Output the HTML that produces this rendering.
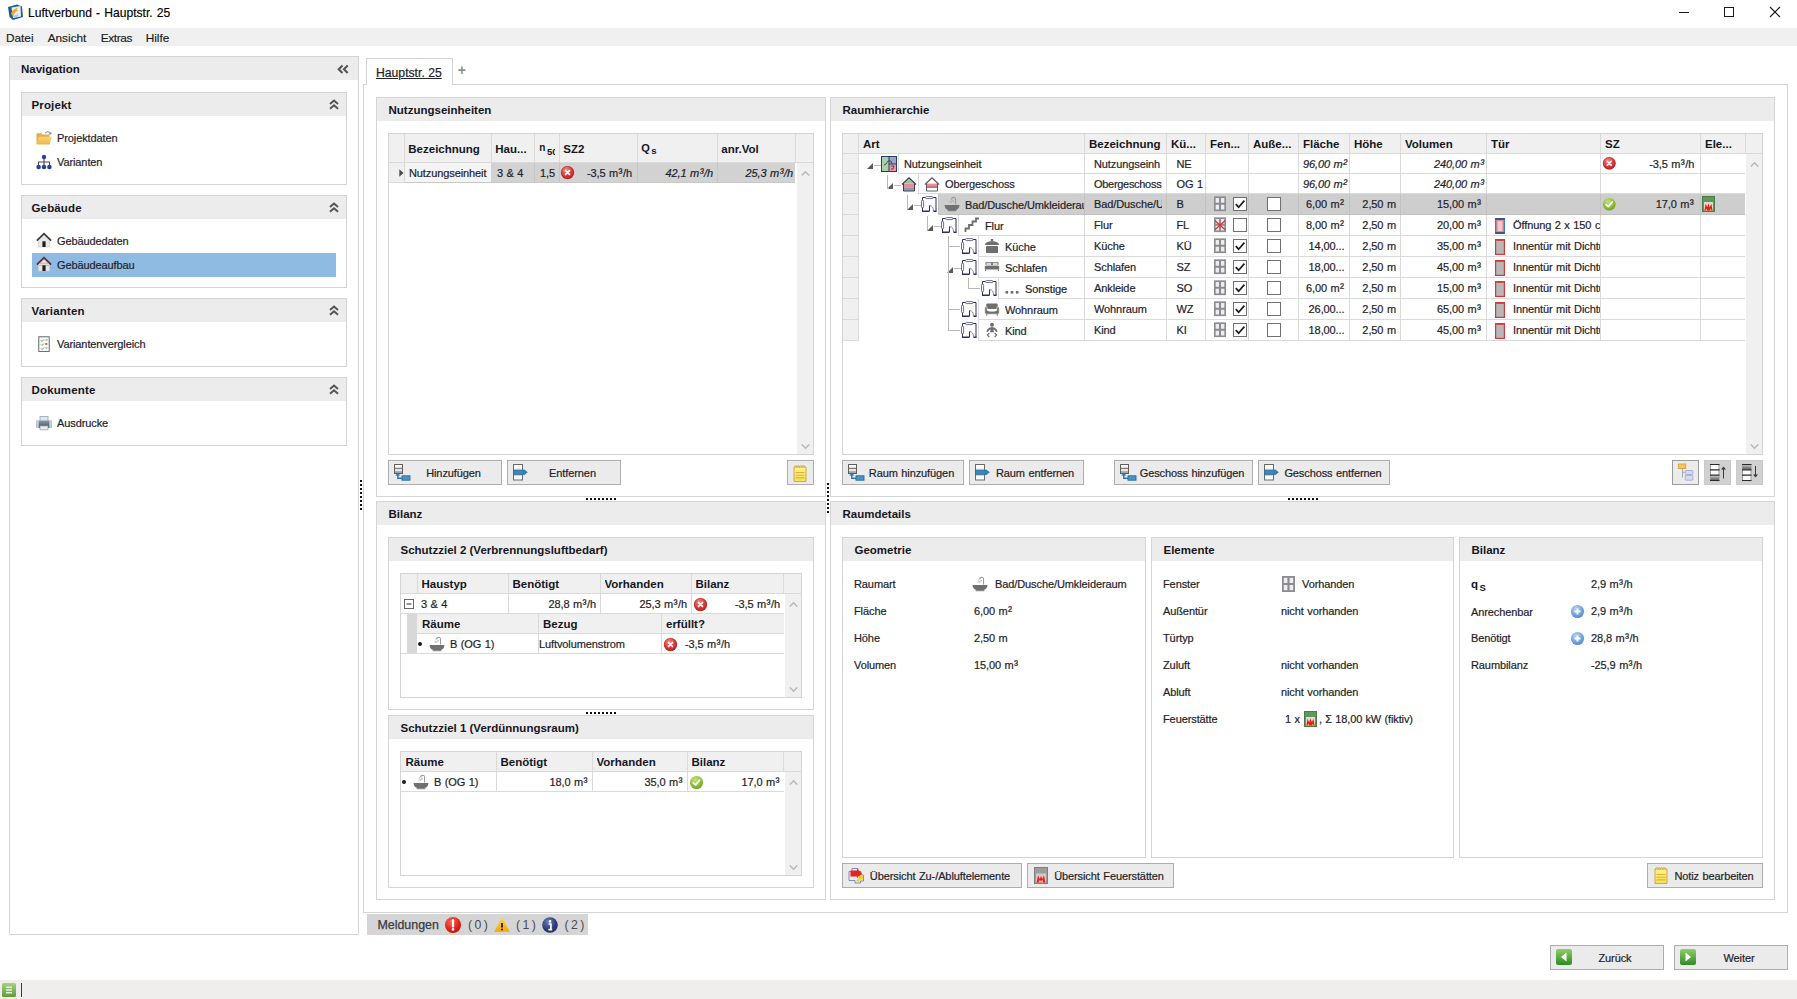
<!DOCTYPE html>
<html lang="de"><head><meta charset="utf-8"><title>Luftverbund - Hauptstr. 25</title>
<style>
html,body{margin:0;padding:0;background:#fff;}
body{width:1797px;height:999px;position:relative;overflow:hidden;font-family:"Liberation Sans",sans-serif;}
.a{position:absolute;}
.t,.b,.tt,.mn,.tab,.ml,.ml2,.t12,.plus{white-space:nowrap;color:#1e1e2a;font-family:"Liberation Sans",sans-serif;}
.t{font-size:11px;letter-spacing:-0.1px;word-spacing:0.6px;-webkit-text-stroke:0.2px #1e1e2a;}
.t12{font-size:12px;}
.i{font-style:italic;}
.b{font-size:11.500px;font-weight:bold;color:#16161e;}
.tt{font-size:12.100px;word-spacing:0.800px;color:#000;-webkit-text-stroke:0.15px #000;}
.mn{font-size:11.800px;color:#1a1a1a;-webkit-text-stroke:0.15px #1a1a1a;}
.tab{font-size:12.200px;text-decoration:underline;color:#22222c;-webkit-text-stroke:0.2px #22222c;}
.plus{font-size:14px;font-weight:bold;color:#909090;}
.ml{font-size:12.400px;color:#3a3a44;-webkit-text-stroke:0.25px #3a3a44;}
.ml2{font-size:12.300px;color:#4a4a54;word-spacing:-1px;}
.s3{font-size:12px;line-height:0;letter-spacing:0.600px;margin-left:0.300px;}
.hn{font-size:10px;position:relative;top:-2px;margin-left:1px;}
.h50{font-size:9.5px;position:relative;top:1.5px;margin-left:1.5px;}
.hq{font-size:11px;position:relative;top:-1px;}
.hs{font-size:9.5px;position:relative;top:1px;margin-left:1.5px;}
.bq{font-size:11.5px;position:relative;top:0px;}
.bs{font-size:9.5px;position:relative;top:3px;margin-left:1.5px;}
svg{overflow:visible;}
</style></head>
<body>
<svg width="0" height="0" style="position:absolute"><defs><radialGradient id="gRed" cx="0.4" cy="0.3" r="0.8"><stop offset="0" stop-color="#f08a86"/><stop offset="0.55" stop-color="#d83a36"/><stop offset="1" stop-color="#b01e1c"/></radialGradient><radialGradient id="gGreen" cx="0.4" cy="0.3" r="0.8"><stop offset="0" stop-color="#c7e27a"/><stop offset="0.55" stop-color="#8fbf3a"/><stop offset="1" stop-color="#6a9a22"/></radialGradient><radialGradient id="gBlue" cx="0.4" cy="0.3" r="0.8"><stop offset="0" stop-color="#b9d6f2"/><stop offset="0.6" stop-color="#6fa3d8"/><stop offset="1" stop-color="#4d84c0"/></radialGradient><radialGradient id="gRed2" cx="0.4" cy="0.3" r="0.8"><stop offset="0" stop-color="#ff6a5e"/><stop offset="0.6" stop-color="#e02318"/><stop offset="1" stop-color="#b80e08"/></radialGradient><radialGradient id="gNavy" cx="0.4" cy="0.3" r="0.8"><stop offset="0" stop-color="#6f7fb8"/><stop offset="0.6" stop-color="#2d3c7c"/><stop offset="1" stop-color="#1c2757"/></radialGradient><linearGradient id="gGrn" x1="0" y1="0" x2="0" y2="1"><stop offset="0" stop-color="#8fd06a"/><stop offset="1" stop-color="#2f8a24"/></linearGradient><linearGradient id="gGrn2" x1="0" y1="0" x2="0" y2="1"><stop offset="0" stop-color="#a4d47c"/><stop offset="1" stop-color="#5f9a3a"/></linearGradient><linearGradient id="gYel" x1="0" y1="0" x2="0" y2="1"><stop offset="0" stop-color="#ffd84a"/><stop offset="1" stop-color="#f5a800"/></linearGradient><linearGradient id="gFold" x1="0" y1="0" x2="0" y2="1"><stop offset="0" stop-color="#f7d67a"/><stop offset="1" stop-color="#eab84a"/></linearGradient><linearGradient id="gPrn" x1="0" y1="0" x2="0" y2="1"><stop offset="0" stop-color="#8a9aa8"/><stop offset="1" stop-color="#3e4e5c"/></linearGradient><linearGradient id="gNote" x1="0" y1="0" x2="0" y2="1"><stop offset="0" stop-color="#fdf290"/><stop offset="1" stop-color="#f6de5c"/></linearGradient><linearGradient id="gBtn" x1="0" y1="0" x2="0" y2="1"><stop offset="0" stop-color="#f0f0f0"/><stop offset="1" stop-color="#e6e6e6"/></linearGradient><linearGradient id="gBox" x1="0" y1="0" x2="0" y2="1"><stop offset="0" stop-color="#f8f8f8"/><stop offset="1" stop-color="#9a9a9a"/></linearGradient><linearGradient id="gRow" x1="0" y1="0" x2="0" y2="1"><stop offset="0" stop-color="#c8c8c8"/><stop offset="1" stop-color="#5a5a5a"/></linearGradient></defs></svg>
<svg class="a" style="left:7px;top:3.5px;" width="16" height="16" viewBox="0 0 16 16"><path d="M1 3L10 0.500L15 2.500L16 13L6 16L2.500 13Z" fill="#1f5f8a"/><path d="M4.500 3.500L13.500 2L14 12.500L6 14Z" fill="#e8eef6"/><path d="M4 10C5 6 8 4.500 11 3.500L9.500 6L12 6.500C9 7 7 8.500 6.500 12Z" fill="#f5a623"/><path d="M6 12l5-2 1 2-5 2z" fill="#b8c8e8"/></svg>
<div class="a tt" style="top:4.5px;line-height:16px;left:28px;">Luftverbund - Hauptstr. 25</div>
<div class="a" style="left:1679px;top:12px;width:10px;height:1px;background:#1a1a1a;"></div>
<div class="a" style="left:1724px;top:7px;width:10px;height:10px;border:1px solid #1a1a1a;box-sizing:border-box;"></div>
<svg class="a" style="left:1769px;top:6px;" width="12" height="12" viewBox="0 0 12 12"><path d="M1 1L11 11M11 1L1 11" stroke="#1a1a1a" stroke-width="1.1"/></svg>
<div class="a" style="left:0px;top:28px;width:1797px;height:18px;background:#f0f0f0;"></div>
<div class="a mn" style="top:29.9px;line-height:16px;left:6px;">Datei</div>
<div class="a mn" style="top:29.9px;line-height:16px;left:47.7px;">Ansicht</div>
<div class="a mn" style="top:29.9px;line-height:16px;left:100.7px;"><span style="letter-spacing:-0.350px">Extras</span></div>
<div class="a mn" style="top:29.9px;line-height:16px;left:145.7px;">Hilfe</div>
<div class="a" style="left:9px;top:56px;width:350px;height:879px;background:#fff;border:1px solid #d4d4d4;box-sizing:border-box;"></div>
<div class="a" style="left:10px;top:57px;width:348px;height:23px;background:#ececec;"></div>
<div class="a b" style="top:61.8px;line-height:14px;left:21px;">Navigation</div>
<svg class="a" style="left:337px;top:64px;" width="12" height="10" viewBox="0 0 12 10"><path d="M5.500 1.500L1.700 5.300L5.500 9.100M10.700 1.500L6.900 5.300L10.700 9.100" stroke="#555" stroke-width="2.100" fill="none"/></svg>
<div class="a" style="left:21px;top:92px;width:326px;height:93px;background:#fff;border:1px solid #d4d4d4;box-sizing:border-box;"></div>
<div class="a" style="left:22px;top:93px;width:324px;height:23px;background:#ececec;"></div>
<div class="a b" style="top:97.7px;line-height:14px;left:31.5px;letter-spacing:0.150px;">Projekt</div>
<svg class="a" style="left:329px;top:99px;" width="10" height="11" viewBox="0 0 10 11"><path d="M1 5L5 1.500L9 5M1 9.800L5 6.300L9 9.800" stroke="#555" stroke-width="2" fill="none"/></svg>
<div class="a" style="left:21px;top:195px;width:326px;height:93px;background:#fff;border:1px solid #d4d4d4;box-sizing:border-box;"></div>
<div class="a" style="left:22px;top:196px;width:324px;height:23px;background:#ececec;"></div>
<div class="a b" style="top:200.7px;line-height:14px;left:31.5px;letter-spacing:0.150px;">Gebäude</div>
<svg class="a" style="left:329px;top:202px;" width="10" height="11" viewBox="0 0 10 11"><path d="M1 5L5 1.500L9 5M1 9.800L5 6.300L9 9.800" stroke="#555" stroke-width="2" fill="none"/></svg>
<div class="a" style="left:21px;top:298px;width:326px;height:69px;background:#fff;border:1px solid #d4d4d4;box-sizing:border-box;"></div>
<div class="a" style="left:22px;top:299px;width:324px;height:23px;background:#ececec;"></div>
<div class="a b" style="top:303.7px;line-height:14px;left:31.5px;letter-spacing:0.150px;">Varianten</div>
<svg class="a" style="left:329px;top:305px;" width="10" height="11" viewBox="0 0 10 11"><path d="M1 5L5 1.500L9 5M1 9.800L5 6.300L9 9.800" stroke="#555" stroke-width="2" fill="none"/></svg>
<div class="a" style="left:21px;top:377px;width:326px;height:69px;background:#fff;border:1px solid #d4d4d4;box-sizing:border-box;"></div>
<div class="a" style="left:22px;top:378px;width:324px;height:23px;background:#ececec;"></div>
<div class="a b" style="top:382.7px;line-height:14px;left:31.5px;letter-spacing:0.150px;">Dokumente</div>
<svg class="a" style="left:329px;top:384px;" width="10" height="11" viewBox="0 0 10 11"><path d="M1 5L5 1.500L9 5M1 9.800L5 6.300L9 9.800" stroke="#555" stroke-width="2" fill="none"/></svg>
<div class="a" style="left:32px;top:253px;width:304px;height:24px;background:#8fbbe2;"></div>
<svg class="a" style="left:36px;top:129.5px;" width="16" height="16" viewBox="0 0 16 16"><path d="M0.5 4.2c0-.6.4-1 1-1h3.6l1.2 1.4h6.200c.6 0 1 .4 1 1V14H0.5Z" fill="#e2ae48"/><path d="M0.5 14.400L2.600 7.600c.2-.5.5-.8 1-.8h11.400c.6 0 .8.4.6 1l-2.200 6.600Z" fill="url(#gFold)"/><path d="M9.200 3.200c1.400-2 4-1.800 5 .2" stroke="#8a8a8a" stroke-width="1.100" fill="none"/><path d="M15.400 1.600v2.800h-2.800z" fill="#8a8a8a"/></svg>
<div class="a t" style="top:131px;line-height:14px;left:57px;">Projektdaten</div>
<svg class="a" style="left:36px;top:153.5px;" width="16" height="16" viewBox="0 0 16 16"><circle cx="8" cy="3" r="2.2" fill="#2a3f9e"/><path d="M8 5v3M2.5 11V8h11v3M8 8v3" stroke="#4a4a4a" stroke-width="1.1" fill="none"/><circle cx="2.6" cy="13" r="2.3" fill="#2a3f9e"/><circle cx="8" cy="13" r="2.3" fill="#2a3f9e"/><circle cx="13.4" cy="13" r="2.3" fill="#2a3f9e"/></svg>
<div class="a t" style="top:155px;line-height:14px;left:57px;">Varianten</div>
<svg class="a" style="left:36px;top:232px;" width="16" height="16" viewBox="0 0 16 16"><path d="M2.5 8.5V15h11V8.5L8 3.5Z" fill="#e8e8e8" stroke="#c8c8c8" stroke-width=".6"/><path d="M0.8 8.6L8 1.6L15.2 8.6" stroke="#3a3a3a" stroke-width="1.7" fill="none"/><rect x="6.4" y="9.3" width="3.2" height="5.7" fill="#1e1e1e"/></svg>
<div class="a t" style="top:233.5px;line-height:14px;left:57px;">Gebäudedaten</div>
<svg class="a" style="left:36px;top:256px;" width="16" height="16" viewBox="0 0 16 16"><path d="M2.5 8.5V15h11V8.5L8 3.5Z" fill="#e8e8e8" stroke="#c8c8c8" stroke-width=".6"/><path d="M4 7.2h8M3 9.4h10" stroke="#d88a8a" stroke-width=".7"/><path d="M0.8 8.6L8 1.6L15.2 8.6" stroke="#5a3030" stroke-width="1.7" fill="none"/><rect x="6.4" y="9.3" width="3.2" height="5.7" fill="#1e1e1e"/></svg>
<div class="a t" style="top:257.5px;line-height:14px;left:57px;">Gebäudeaufbau</div>
<svg class="a" style="left:36px;top:335.5px;" width="16" height="16" viewBox="0 0 16 16"><rect x="2.800" y="0.800" width="10.400" height="14.600" fill="#fbfbfb" stroke="#565656" stroke-width=".9"/><path d="M5 4.5l1 1 2-2M5 8.5l1 1 2-2M5 12.5l1 1 2-2" stroke="#3a9a4a" stroke-width=".9" fill="none"/><path d="M9.5 4h2M9.5 12h2" stroke="#3a9a4a" stroke-width=".9"/><path d="M9.3 7l2 2M11.3 7l-2 2" stroke="#d03030" stroke-width=".9"/></svg>
<div class="a t" style="top:337px;line-height:14px;left:57px;">Variantenvergleich</div>
<svg class="a" style="left:36px;top:414.5px;" width="16" height="16" viewBox="0 0 16 16"><rect x="4" y="1.5" width="8" height="5" fill="#dfe6ec" stroke="#9aa8b4" stroke-width=".8"/><rect x="0.300" y="5.500" width="15.400" height="7.500" rx="1" fill="url(#gPrn)"/><rect x="0.300" y="5.500" width="2.400" height="7.500" fill="#c8d2da"/><rect x="13.300" y="5.500" width="2.400" height="7.500" fill="#c8d2da"/><rect x="4" y="11" width="8" height="3.8" fill="#e8edf1" stroke="#9aa8b4" stroke-width=".8"/></svg>
<div class="a t" style="top:416px;line-height:14px;left:57px;">Ausdrucke</div>
<div class="a" style="left:360px;top:480px;width:2px;height:2px;background:#111;"></div>
<div class="a" style="left:360px;top:484px;width:2px;height:2px;background:#111;"></div>
<div class="a" style="left:360px;top:488px;width:2px;height:2px;background:#111;"></div>
<div class="a" style="left:360px;top:492px;width:2px;height:2px;background:#111;"></div>
<div class="a" style="left:360px;top:496px;width:2px;height:2px;background:#111;"></div>
<div class="a" style="left:360px;top:500px;width:2px;height:2px;background:#111;"></div>
<div class="a" style="left:360px;top:504px;width:2px;height:2px;background:#111;"></div>
<div class="a" style="left:360px;top:508px;width:2px;height:2px;background:#111;"></div>
<div class="a" style="left:363px;top:84px;width:1425px;height:829px;background:#fff;border:1px solid #d4d4d4;box-sizing:border-box;"></div>
<div class="a" style="left:366px;top:58px;width:87px;height:27px;background:#fff;border:1px solid #d4d4d4;box-sizing:border-box;border-bottom:none;"></div>
<div class="a tab" style="top:64.5px;line-height:16px;left:376px;">Hauptstr. 25</div>
<div class="a plus" style="top:62px;line-height:16px;left:361.9px;width:200px;text-align:center;">+</div>
<div class="a" style="left:376px;top:97px;width:450px;height:400px;background:#fff;border:1px solid #d4d4d4;box-sizing:border-box;"></div>
<div class="a" style="left:377px;top:98px;width:448px;height:23px;background:#ececec;"></div>
<div class="a b" style="top:102.8px;line-height:14px;left:388.5px;">Nutzungseinheiten</div>
<div class="a" style="left:388px;top:133px;width:426px;height:322px;background:#fff;border:1px solid #d4d4d4;box-sizing:border-box;"></div>
<div class="a" style="left:389px;top:134px;width:424px;height:29px;background:#f0f0f0;"></div>
<div class="a" style="left:404px;top:134px;width:1px;height:29px;background:#dadada;"></div>
<div class="a" style="left:491px;top:134px;width:1px;height:29px;background:#dadada;"></div>
<div class="a" style="left:534px;top:134px;width:1px;height:29px;background:#dadada;"></div>
<div class="a" style="left:559px;top:134px;width:1px;height:29px;background:#dadada;"></div>
<div class="a" style="left:637px;top:134px;width:1px;height:29px;background:#dadada;"></div>
<div class="a" style="left:717px;top:134px;width:1px;height:29px;background:#dadada;"></div>
<div class="a" style="left:795px;top:134px;width:1px;height:29px;background:#dadada;"></div>
<div class="a" style="left:389px;top:162px;width:424px;height:1px;background:#dadada;"></div>
<div class="a b" style="top:142px;line-height:14px;left:408.3px;width:81.7px;overflow:hidden;">Bezeichnung</div>
<div class="a b" style="top:142px;line-height:14px;left:495.3px;width:37.7px;overflow:hidden;">Hau...</div>
<div class="a b" style="top:142px;line-height:14px;left:538.3px;width:17.2px;overflow:hidden;"><span class="hn">n</span><span class="h50">50</span></div>
<div class="a b" style="top:142px;line-height:14px;left:563.3px;width:72.7px;overflow:hidden;">SZ2</div>
<div class="a b" style="top:142px;line-height:14px;left:641.3px;width:74.7px;overflow:hidden;"><span class="hq">Q</span><span class="hs">s</span></div>
<div class="a b" style="top:142px;line-height:14px;left:721.3px;width:72.7px;overflow:hidden;">anr.Vol</div>
<div class="a" style="left:389px;top:163px;width:15px;height:20px;background:#f0f0f0;"></div>
<div class="a" style="left:389px;top:182px;width:15px;height:1px;background:#dadada;"></div>
<div class="a" style="left:404px;top:163px;width:1px;height:20px;background:#dadada;"></div>
<div class="a" style="left:405px;top:163px;width:86px;height:19px;background:#f4f4f4;"></div>
<div class="a" style="left:491px;top:163px;width:304px;height:20px;background:#d2d2d2;"></div>
<div class="a" style="left:534px;top:163px;width:1px;height:20px;background:#c6c6c6;"></div>
<div class="a" style="left:559px;top:163px;width:1px;height:20px;background:#c6c6c6;"></div>
<div class="a" style="left:637px;top:163px;width:1px;height:20px;background:#c6c6c6;"></div>
<div class="a" style="left:717px;top:163px;width:1px;height:20px;background:#c6c6c6;"></div>
<div class="a" style="left:405px;top:182px;width:390px;height:1px;background:#c8c8c8;"></div>
<svg class="a" style="left:398.5px;top:169px;" width="5" height="8" viewBox="0 0 5 8"><path d="M0.300 0.300L4.500 4L0.300 7.700Z" fill="#4a4a4a"/></svg>
<div class="a t" style="top:165.8px;line-height:14px;left:409px;">Nutzungseinheit</div>
<div class="a t" style="top:165.8px;line-height:14px;left:497px;">3 &amp; 4</div>
<div class="a t" style="top:165.8px;line-height:14px;left:540px;">1,5</div>
<svg class="a" style="left:560.3px;top:165.3px;" width="15" height="15" viewBox="0 0 16 16"><circle cx="8" cy="8" r="7" fill="url(#gRed)"/><circle cx="8" cy="8" r="6.600" fill="none" stroke="#a01a18" stroke-width=".8" opacity=".55"/><path d="M5.900 5.900L10.100 10.100M10.100 5.900L5.900 10.100" stroke="#fff" stroke-width="1.900" stroke-linecap="round" opacity=".95"/></svg>
<div class="a t" style="top:165.8px;line-height:14px;right:1165px;text-align:right;">-3,5 m<span class="s3">³</span>/h</div>
<div class="a t i" style="top:165.8px;line-height:14px;right:1084px;text-align:right;">42,1 m<span class="s3">³</span>/h</div>
<div class="a t i" style="top:165.8px;line-height:14px;right:1004px;text-align:right;">25,3 m<span class="s3">³</span>/h</div>
<div class="a" style="left:797px;top:163px;width:16px;height:291px;background:#f0f0f0;"></div>
<svg class="a" style="left:800.5px;top:169.5px;" width="9" height="7" viewBox="0 0 9 7"><path d="M0.800 5.500L4.500 1.800L8.200 5.500" stroke="#b8b8b8" stroke-width="1.500" fill="none"/></svg>
<svg class="a" style="left:800.5px;top:442.5px;" width="9" height="7" viewBox="0 0 9 7"><path d="M0.800 1.500L4.500 5.200L8.200 1.500" stroke="#b8b8b8" stroke-width="1.500" fill="none"/></svg>
<div class="a" style="left:388px;top:460px;width:114px;height:25px;background:#ebebeb;border:1px solid #adadad;box-sizing:border-box;"></div>
<svg class="a" style="left:394px;top:463.8px;" width="16" height="16" viewBox="0 0 16 16"><rect x="0.500" y="0.500" width="8" height="9" fill="url(#gBox)" stroke="#5e5e5e"/><path d="M0.500 4.800h8" stroke="#5e5e5e"/><rect x="1" y="1" width="7" height="1.600" fill="#fdfdfd"/><rect x="1" y="5.300" width="7" height="1.400" fill="#fdfdfd"/><path d="M3.800 14V10.500" stroke="#2878b0" stroke-width="1.500" fill="none"/><path d="M1.200 11.600L3.800 8.800L6.400 11.600Z" fill="#2878b0"/><path d="M3.100 14.300h5" stroke="#2878b0" stroke-width="1.500"/><rect x="8" y="11.800" width="8" height="4.400" fill="#4a94c8" stroke="#2a6a9a" stroke-width=".9"/></svg>
<div class="a t" style="top:465.8px;line-height:14px;left:353.5px;width:200px;text-align:center;">Hinzufügen</div>
<div class="a" style="left:507px;top:460px;width:114px;height:25px;background:#ebebeb;border:1px solid #adadad;box-sizing:border-box;"></div>
<svg class="a" style="left:513px;top:463.8px;" width="16" height="16" viewBox="0 0 16 16"><rect x="0.500" y="0.500" width="9" height="15.500" fill="url(#gBox)" stroke="#6a6a6a"/><rect x="1" y="1" width="8" height="3.600" fill="#fbfbfb"/><rect x="1" y="11.600" width="8" height="3.800" fill="#fbfbfb"/><rect x="0.500" y="6.200" width="10.500" height="4.100" fill="#3c88bc" stroke="#2a6a9a" stroke-width=".8"/><path d="M11 5.300L14.800 8.250L11 11.200Z" fill="#2f7fb8"/></svg>
<div class="a t" style="top:465.8px;line-height:14px;left:472.5px;width:200px;text-align:center;">Entfernen</div>
<div class="a" style="left:787px;top:460px;width:27px;height:25px;background:#ebebeb;border:1px solid #adadad;box-sizing:border-box;"></div>
<svg class="a" style="left:792.5px;top:463.8px;" width="16" height="16" viewBox="0 0 16 16"><path d="M1 3h12v14.500H1Z" fill="url(#gNote)" stroke="#c8a42c" stroke-width=".9"/><path d="M1.500 3.500c0-2.500 1.700-2.500 1.700 0c0-2.500 1.700-2.500 1.700 0c0-2.500 1.700-2.500 1.700 0c0-2.500 1.700-2.500 1.700 0c0-2.500 1.700-2.500 1.700 0c0-2.500 1.700-2.500 1.700 0" fill="#fff6b0" stroke="#b8962c" stroke-width=".7"/><path d="M2.500 8.500h9M2.500 11.200h9M2.500 13.900h9" stroke="#dcb432" stroke-width="1.100"/></svg>
<div class="a" style="left:586px;top:498px;width:2px;height:2px;background:#111;"></div>
<div class="a" style="left:590px;top:498px;width:2px;height:2px;background:#111;"></div>
<div class="a" style="left:594px;top:498px;width:2px;height:2px;background:#111;"></div>
<div class="a" style="left:598px;top:498px;width:2px;height:2px;background:#111;"></div>
<div class="a" style="left:602px;top:498px;width:2px;height:2px;background:#111;"></div>
<div class="a" style="left:606px;top:498px;width:2px;height:2px;background:#111;"></div>
<div class="a" style="left:610px;top:498px;width:2px;height:2px;background:#111;"></div>
<div class="a" style="left:614px;top:498px;width:2px;height:2px;background:#111;"></div>
<div class="a" style="left:376px;top:501px;width:450px;height:399px;background:#fff;border:1px solid #d4d4d4;box-sizing:border-box;"></div>
<div class="a" style="left:377px;top:502px;width:448px;height:23px;background:#ececec;"></div>
<div class="a b" style="top:506.8px;line-height:14px;left:388.5px;">Bilanz</div>
<div class="a" style="left:388px;top:537px;width:426px;height:173px;background:#fff;border:1px solid #d4d4d4;box-sizing:border-box;"></div>
<div class="a" style="left:389px;top:538px;width:424px;height:23px;background:#ececec;"></div>
<div class="a b" style="top:542.8px;line-height:14px;left:400.5px;">Schutzziel 2 (Verbrennungsluftbedarf)</div>
<div class="a" style="left:400px;top:573px;width:402px;height:125px;background:#fff;border:1px solid #d4d4d4;box-sizing:border-box;"></div>
<div class="a" style="left:401px;top:574px;width:400px;height:20px;background:#f0f0f0;"></div>
<div class="a" style="left:417px;top:574px;width:1px;height:20px;background:#dadada;"></div>
<div class="a" style="left:508px;top:574px;width:1px;height:20px;background:#dadada;"></div>
<div class="a" style="left:600px;top:574px;width:1px;height:20px;background:#dadada;"></div>
<div class="a" style="left:691px;top:574px;width:1px;height:20px;background:#dadada;"></div>
<div class="a" style="left:783px;top:574px;width:1px;height:20px;background:#dadada;"></div>
<div class="a" style="left:401px;top:593px;width:400px;height:1px;background:#dadada;"></div>
<div class="a b" style="top:576.8px;line-height:14px;left:421.5px;width:85.5px;overflow:hidden;">Haustyp</div>
<div class="a b" style="top:576.8px;line-height:14px;left:512.5px;width:86.5px;overflow:hidden;">Benötigt</div>
<div class="a b" style="top:576.8px;line-height:14px;left:604.5px;width:85.5px;overflow:hidden;">Vorhanden</div>
<div class="a b" style="top:576.8px;line-height:14px;left:695.5px;width:86.5px;overflow:hidden;">Bilanz</div>
<div class="a" style="left:508px;top:594px;width:1px;height:20px;background:#dadada;"></div>
<div class="a" style="left:600px;top:594px;width:1px;height:20px;background:#dadada;"></div>
<div class="a" style="left:691px;top:594px;width:1px;height:20px;background:#dadada;"></div>
<div class="a" style="left:401px;top:613px;width:383px;height:1px;background:#dadada;"></div>
<svg class="a" style="left:404px;top:599px;" width="10" height="10" viewBox="0 0 10 10"><rect x="0.500" y="0.500" width="9" height="9" fill="#fff" stroke="#6a6a6a"/><path d="M2.500 5H7.500" stroke="#2a2a2a"/></svg>
<div class="a t" style="top:597px;line-height:14px;left:421px;">3 &amp; 4</div>
<div class="a t" style="top:597px;line-height:14px;right:1201px;text-align:right;">28,8 m<span class="s3">³</span>/h</div>
<div class="a t" style="top:597px;line-height:14px;right:1110px;text-align:right;">25,3 m<span class="s3">³</span>/h</div>
<svg class="a" style="left:692.5px;top:596.5px;" width="15" height="15" viewBox="0 0 16 16"><circle cx="8" cy="8" r="7" fill="url(#gRed)"/><circle cx="8" cy="8" r="6.600" fill="none" stroke="#a01a18" stroke-width=".8" opacity=".55"/><path d="M5.900 5.900L10.100 10.100M10.100 5.900L5.900 10.100" stroke="#fff" stroke-width="1.900" stroke-linecap="round" opacity=".95"/></svg>
<div class="a t" style="top:597px;line-height:14px;right:1017px;text-align:right;">-3,5 m<span class="s3">³</span>/h</div>
<div class="a" style="left:407px;top:614px;width:10px;height:40px;background:#d8d8d8;"></div>
<div class="a" style="left:417px;top:614px;width:367px;height:20px;background:#f0f0f0;"></div>
<div class="a" style="left:538px;top:614px;width:1px;height:40px;background:#dadada;"></div>
<div class="a" style="left:661px;top:614px;width:1px;height:40px;background:#dadada;"></div>
<div class="a" style="left:417px;top:633px;width:367px;height:1px;background:#dadada;"></div>
<div class="a" style="left:401px;top:653px;width:383px;height:1px;background:#dadada;"></div>
<div class="a b" style="top:616.8px;line-height:14px;left:422px;">Räume</div>
<div class="a b" style="top:616.8px;line-height:14px;left:543px;">Bezug</div>
<div class="a b" style="top:616.8px;line-height:14px;left:666px;">erfüllt?</div>
<div class="a" style="left:418px;top:642px;width:4px;height:4px;background:#1a1a1a;border-radius:2px;"></div>
<svg class="a" style="left:429px;top:636px;" width="16" height="16" viewBox="0 0 16 16"><path d="M0.600 9h14.800c0 3-2 5-5 5H5.600C2.600 14 .6 12 .6 9Z" fill="#707070"/><path d="M3.600 14.200h8.800v1H3.600z" fill="#707070"/><path d="M11.5 8.5V3c0-1.2-1-1.8-2-1.6L7.2 2.4" stroke="#9a9a9a" stroke-width="1.1" fill="none"/><path d="M8.6 1.6L6 4.6M7 5.2L5.6 7M8.2 4.6L7.6 6.6M9 3.6l.4 2" stroke="#9a9a9a" stroke-width=".7"/></svg>
<div class="a t" style="top:637px;line-height:14px;left:450px;">B (OG 1)</div>
<div class="a t" style="top:637px;line-height:14px;left:539px;">Luftvolumenstrom</div>
<svg class="a" style="left:663px;top:636.5px;" width="15" height="15" viewBox="0 0 16 16"><circle cx="8" cy="8" r="7" fill="url(#gRed)"/><circle cx="8" cy="8" r="6.600" fill="none" stroke="#a01a18" stroke-width=".8" opacity=".55"/><path d="M5.900 5.900L10.100 10.100M10.100 5.900L5.900 10.100" stroke="#fff" stroke-width="1.900" stroke-linecap="round" opacity=".95"/></svg>
<div class="a t" style="top:637px;line-height:14px;left:685px;">-3,5 m<span class="s3">³</span>/h</div>
<div class="a" style="left:785px;top:594px;width:16px;height:103px;background:#f0f0f0;"></div>
<svg class="a" style="left:788.5px;top:600.5px;" width="9" height="7" viewBox="0 0 9 7"><path d="M0.800 5.500L4.500 1.800L8.200 5.500" stroke="#b8b8b8" stroke-width="1.500" fill="none"/></svg>
<svg class="a" style="left:788.5px;top:685.5px;" width="9" height="7" viewBox="0 0 9 7"><path d="M0.800 1.500L4.500 5.200L8.200 1.500" stroke="#b8b8b8" stroke-width="1.500" fill="none"/></svg>
<div class="a" style="left:586px;top:712px;width:2px;height:2px;background:#111;"></div>
<div class="a" style="left:590px;top:712px;width:2px;height:2px;background:#111;"></div>
<div class="a" style="left:594px;top:712px;width:2px;height:2px;background:#111;"></div>
<div class="a" style="left:598px;top:712px;width:2px;height:2px;background:#111;"></div>
<div class="a" style="left:602px;top:712px;width:2px;height:2px;background:#111;"></div>
<div class="a" style="left:606px;top:712px;width:2px;height:2px;background:#111;"></div>
<div class="a" style="left:610px;top:712px;width:2px;height:2px;background:#111;"></div>
<div class="a" style="left:614px;top:712px;width:2px;height:2px;background:#111;"></div>
<div class="a" style="left:388px;top:715px;width:426px;height:173px;background:#fff;border:1px solid #d4d4d4;box-sizing:border-box;"></div>
<div class="a" style="left:389px;top:716px;width:424px;height:23px;background:#ececec;"></div>
<div class="a b" style="top:720.8px;line-height:14px;left:400.5px;">Schutzziel 1 (Verdünnungsraum)</div>
<div class="a" style="left:400px;top:751px;width:402px;height:125px;background:#fff;border:1px solid #d4d4d4;box-sizing:border-box;"></div>
<div class="a" style="left:401px;top:752px;width:400px;height:20px;background:#f0f0f0;"></div>
<div class="a" style="left:496px;top:752px;width:1px;height:20px;background:#dadada;"></div>
<div class="a" style="left:592px;top:752px;width:1px;height:20px;background:#dadada;"></div>
<div class="a" style="left:687px;top:752px;width:1px;height:20px;background:#dadada;"></div>
<div class="a" style="left:783px;top:752px;width:1px;height:20px;background:#dadada;"></div>
<div class="a" style="left:401px;top:771px;width:400px;height:1px;background:#dadada;"></div>
<div class="a b" style="top:754.8px;line-height:14px;left:405.5px;width:89.5px;overflow:hidden;">Räume</div>
<div class="a b" style="top:754.8px;line-height:14px;left:500.5px;width:90.5px;overflow:hidden;">Benötigt</div>
<div class="a b" style="top:754.8px;line-height:14px;left:596.5px;width:89.5px;overflow:hidden;">Vorhanden</div>
<div class="a b" style="top:754.8px;line-height:14px;left:691.5px;width:90.5px;overflow:hidden;">Bilanz</div>
<div class="a" style="left:496px;top:772px;width:1px;height:20px;background:#dadada;"></div>
<div class="a" style="left:592px;top:772px;width:1px;height:20px;background:#dadada;"></div>
<div class="a" style="left:687px;top:772px;width:1px;height:20px;background:#dadada;"></div>
<div class="a" style="left:401px;top:791px;width:383px;height:1px;background:#dadada;"></div>
<div class="a" style="left:402px;top:780px;width:4px;height:4px;background:#1a1a1a;border-radius:2px;"></div>
<svg class="a" style="left:413px;top:774px;" width="16" height="16" viewBox="0 0 16 16"><path d="M0.600 9h14.800c0 3-2 5-5 5H5.600C2.600 14 .6 12 .6 9Z" fill="#707070"/><path d="M3.600 14.200h8.800v1H3.600z" fill="#707070"/><path d="M11.5 8.5V3c0-1.2-1-1.8-2-1.6L7.2 2.4" stroke="#9a9a9a" stroke-width="1.1" fill="none"/><path d="M8.6 1.6L6 4.6M7 5.2L5.6 7M8.2 4.6L7.6 6.6M9 3.6l.4 2" stroke="#9a9a9a" stroke-width=".7"/></svg>
<div class="a t" style="top:775px;line-height:14px;left:434px;">B (OG 1)</div>
<div class="a t" style="top:775px;line-height:14px;right:1209px;text-align:right;">18,0 m<span class="s3">³</span></div>
<div class="a t" style="top:775px;line-height:14px;right:1114px;text-align:right;">35,0 m<span class="s3">³</span></div>
<svg class="a" style="left:688.5px;top:774.5px;" width="15" height="15" viewBox="0 0 16 16"><circle cx="8" cy="8" r="7" fill="url(#gGreen)"/><path d="M4.6 8.4L7 10.6L11.4 5.4" stroke="#fff" stroke-width="1.8" fill="none" stroke-linecap="round" stroke-linejoin="round"/></svg>
<div class="a t" style="top:775px;line-height:14px;right:1017px;text-align:right;">17,0 m<span class="s3">³</span></div>
<div class="a" style="left:785px;top:772px;width:16px;height:103px;background:#f0f0f0;"></div>
<svg class="a" style="left:788.5px;top:778.5px;" width="9" height="7" viewBox="0 0 9 7"><path d="M0.800 5.500L4.500 1.800L8.200 5.500" stroke="#b8b8b8" stroke-width="1.500" fill="none"/></svg>
<svg class="a" style="left:788.5px;top:863.5px;" width="9" height="7" viewBox="0 0 9 7"><path d="M0.800 1.500L4.500 5.200L8.200 1.500" stroke="#b8b8b8" stroke-width="1.500" fill="none"/></svg>
<div class="a" style="left:367px;top:914px;width:221px;height:21px;background:#d5d5d5;"></div>
<div class="a ml" style="top:916.5px;line-height:16px;left:377.5px;">Meldungen</div>
<svg class="a" style="left:445px;top:916.5px;" width="16" height="16" viewBox="0 0 16 16"><circle cx="8" cy="8" r="8" fill="url(#gRed2)"/><path d="M8 3.2V9.6" stroke="#fff" stroke-width="2.2" stroke-linecap="round"/><circle cx="8" cy="12.4" r="1.3" fill="#fff"/></svg>
<div class="a ml2" style="top:916.5px;line-height:16px;left:468px;">( 0 )</div>
<svg class="a" style="left:493.5px;top:916.5px;" width="16" height="16" viewBox="0 0 16 16"><path d="M8 0.300L15.800 14.800H0.200Z" fill="url(#gYel)"/><path d="M8 6V10.5" stroke="#222" stroke-width="1.8"/><circle cx="8" cy="12.6" r="1" fill="#222"/></svg>
<div class="a ml2" style="top:916.5px;line-height:16px;left:516px;">( 1 )</div>
<svg class="a" style="left:541.5px;top:916.5px;" width="16" height="16" viewBox="0 0 16 16"><circle cx="8" cy="8" r="7.8" fill="url(#gNavy)"/><circle cx="8" cy="4.4" r="1.3" fill="#fff"/><path d="M6.6 7H8.9V12.6M6.4 12.6H10.2" stroke="#fff" stroke-width="1.7" fill="none"/></svg>
<div class="a ml2" style="top:916.5px;line-height:16px;left:564.5px;">( 2 )</div>
<div class="a" style="left:830px;top:97px;width:945px;height:400px;background:#fff;border:1px solid #d4d4d4;box-sizing:border-box;"></div>
<div class="a" style="left:831px;top:98px;width:943px;height:23px;background:#ececec;"></div>
<div class="a b" style="top:102.8px;line-height:14px;left:842.5px;">Raumhierarchie</div>
<div class="a" style="left:842px;top:133px;width:921px;height:322px;background:#fff;border:1px solid #d4d4d4;box-sizing:border-box;"></div>
<div class="a" style="left:843px;top:134px;width:919px;height:20px;background:#f0f0f0;"></div>
<div class="a" style="left:858px;top:134px;width:1px;height:20px;background:#dadada;"></div>
<div class="a" style="left:1084px;top:134px;width:1px;height:20px;background:#dadada;"></div>
<div class="a" style="left:1166px;top:134px;width:1px;height:20px;background:#dadada;"></div>
<div class="a" style="left:1205px;top:134px;width:1px;height:20px;background:#dadada;"></div>
<div class="a" style="left:1248px;top:134px;width:1px;height:20px;background:#dadada;"></div>
<div class="a" style="left:1298px;top:134px;width:1px;height:20px;background:#dadada;"></div>
<div class="a" style="left:1349px;top:134px;width:1px;height:20px;background:#dadada;"></div>
<div class="a" style="left:1400px;top:134px;width:1px;height:20px;background:#dadada;"></div>
<div class="a" style="left:1486px;top:134px;width:1px;height:20px;background:#dadada;"></div>
<div class="a" style="left:1600px;top:134px;width:1px;height:20px;background:#dadada;"></div>
<div class="a" style="left:1700px;top:134px;width:1px;height:20px;background:#dadada;"></div>
<div class="a" style="left:1745px;top:134px;width:1px;height:20px;background:#dadada;"></div>
<div class="a" style="left:843px;top:153px;width:919px;height:1px;background:#dadada;"></div>
<div class="a b" style="top:136.6px;line-height:14px;left:863px;width:220px;overflow:hidden;">Art</div>
<div class="a b" style="top:136.6px;line-height:14px;left:1089px;width:76px;overflow:hidden;">Bezeichnung</div>
<div class="a b" style="top:136.6px;line-height:14px;left:1171px;width:33px;overflow:hidden;">Kü...</div>
<div class="a b" style="top:136.6px;line-height:14px;left:1210px;width:37px;overflow:hidden;">Fen...</div>
<div class="a b" style="top:136.6px;line-height:14px;left:1253px;width:44px;overflow:hidden;">Auße...</div>
<div class="a b" style="top:136.6px;line-height:14px;left:1303px;width:45px;overflow:hidden;">Fläche</div>
<div class="a b" style="top:136.6px;line-height:14px;left:1354px;width:45px;overflow:hidden;">Höhe</div>
<div class="a b" style="top:136.6px;line-height:14px;left:1405px;width:80px;overflow:hidden;">Volumen</div>
<div class="a b" style="top:136.6px;line-height:14px;left:1491px;width:108px;overflow:hidden;">Tür</div>
<div class="a b" style="top:136.6px;line-height:14px;left:1605px;width:94px;overflow:hidden;">SZ</div>
<div class="a b" style="top:136.6px;line-height:14px;left:1705px;width:39px;overflow:hidden;">Ele...</div>
<div class="a" style="left:843px;top:154px;width:15px;height:187px;background:#f0f0f0;"></div>
<div class="a" style="left:858px;top:154px;width:1px;height:187px;background:#dadada;"></div>
<div class="a" style="left:843px;top:173px;width:15px;height:1px;background:#dadada;"></div>
<div class="a" style="left:898px;top:173px;width:847px;height:1px;background:#dadada;"></div>
<div class="a" style="left:898px;top:154px;width:1px;height:20px;background:#dadada;"></div>
<div class="a" style="left:1084px;top:154px;width:1px;height:20px;background:#dadada;"></div>
<div class="a" style="left:1166px;top:154px;width:1px;height:20px;background:#dadada;"></div>
<div class="a" style="left:1205px;top:154px;width:1px;height:20px;background:#dadada;"></div>
<div class="a" style="left:1248px;top:154px;width:1px;height:20px;background:#dadada;"></div>
<div class="a" style="left:1298px;top:154px;width:1px;height:20px;background:#dadada;"></div>
<div class="a" style="left:1349px;top:154px;width:1px;height:20px;background:#dadada;"></div>
<div class="a" style="left:1400px;top:154px;width:1px;height:20px;background:#dadada;"></div>
<div class="a" style="left:1486px;top:154px;width:1px;height:20px;background:#dadada;"></div>
<div class="a" style="left:1600px;top:154px;width:1px;height:20px;background:#dadada;"></div>
<div class="a" style="left:1700px;top:154px;width:1px;height:20px;background:#dadada;"></div>
<svg class="a" style="left:881px;top:155.7px;" width="16" height="16" viewBox="0 0 16 16"><rect x="0.5" y="0.5" width="15" height="15" fill="#fff" stroke="#2a3a6a"/><rect x="1" y="1" width="7" height="14" fill="#a8d0a8"/><rect x="8" y="1" width="7" height="7" fill="#9aa8c8"/><rect x="8" y="8" width="7" height="7" fill="#f0989a"/><path d="M8 .5V15.5M8 8H15.5" stroke="#2a3a6a" stroke-width="1"/><path d="M3 9l2-1 2-3 3 0 1 3M10 10h3l-1 3h-2" stroke="#2a3a6a" stroke-width=".8" fill="none"/></svg>
<div class="a t" style="top:157px;line-height:14px;left:904px;width:180px;overflow:hidden;">Nutzungseinheit</div>
<div class="a t" style="top:156.8px;line-height:14px;left:1094px;width:68px;overflow:hidden;">Nutzungseinh</div>
<div class="a t" style="top:156.8px;line-height:14px;left:1176.5px;">NE</div>
<div class="a t i" style="top:156.8px;line-height:14px;right:449.5px;text-align:right;">96,00 m<span class="s3">²</span></div>
<div class="a t i" style="top:156.8px;line-height:14px;right:312.5px;text-align:right;">240,00 m<span class="s3">³</span></div>
<svg class="a" style="left:1601.7px;top:156.1px;" width="14.5" height="14.5" viewBox="0 0 16 16"><circle cx="8" cy="8" r="7" fill="url(#gRed)"/><circle cx="8" cy="8" r="6.600" fill="none" stroke="#a01a18" stroke-width=".8" opacity=".55"/><path d="M5.900 5.900L10.100 10.100M10.100 5.900L5.900 10.100" stroke="#fff" stroke-width="1.900" stroke-linecap="round" opacity=".95"/></svg>
<div class="a t" style="top:156.8px;line-height:14px;right:102.7px;text-align:right;">-3,5 m<span class="s3">³</span>/h</div>
<div class="a" style="left:843px;top:193px;width:15px;height:1px;background:#dadada;"></div>
<div class="a" style="left:918px;top:193px;width:827px;height:1px;background:#dadada;"></div>
<div class="a" style="left:918px;top:174px;width:1px;height:20px;background:#dadada;"></div>
<div class="a" style="left:1084px;top:174px;width:1px;height:20px;background:#dadada;"></div>
<div class="a" style="left:1166px;top:174px;width:1px;height:20px;background:#dadada;"></div>
<div class="a" style="left:1205px;top:174px;width:1px;height:20px;background:#dadada;"></div>
<div class="a" style="left:1248px;top:174px;width:1px;height:20px;background:#dadada;"></div>
<div class="a" style="left:1298px;top:174px;width:1px;height:20px;background:#dadada;"></div>
<div class="a" style="left:1349px;top:174px;width:1px;height:20px;background:#dadada;"></div>
<div class="a" style="left:1400px;top:174px;width:1px;height:20px;background:#dadada;"></div>
<div class="a" style="left:1486px;top:174px;width:1px;height:20px;background:#dadada;"></div>
<div class="a" style="left:1600px;top:174px;width:1px;height:20px;background:#dadada;"></div>
<div class="a" style="left:1700px;top:174px;width:1px;height:20px;background:#dadada;"></div>
<svg class="a" style="left:901px;top:175.7px;" width="16" height="16" viewBox="0 0 16 16"><path d="M2.5 7.5V15h11V7.5L8 2.5Z" fill="#fff"/><path d="M3 7.6L8 3l5 4.6Z" fill="#8fc89a"/><rect x="3" y="7.6" width="10" height="3.6" fill="#f08a90"/><rect x="3" y="11.2" width="10" height="3.6" fill="#8a98c0"/><path d="M2.5 7.5V15h11V7.5" stroke="#3a3a4a" stroke-width="1" fill="none"/><path d="M1 8.5L8 1.8L15 8.5" stroke="#3a3a4a" stroke-width="1.3" fill="none"/></svg>
<svg class="a" style="left:924px;top:175.7px;" width="16" height="16" viewBox="0 0 16 16"><path d="M2.5 7.5V15h11V7.5L8 2.5Z" fill="#fff"/><rect x="3" y="7.6" width="10" height="3.6" fill="#f08a90"/><path d="M2.5 7.5V15h11V7.5M2.5 11.2h11" stroke="#5a5a6a" stroke-width="1" fill="none"/><path d="M1 8.5L8 1.8L15 8.5" stroke="#5a5a6a" stroke-width="1.3" fill="none"/></svg>
<div class="a t" style="top:177px;line-height:14px;left:945px;width:139px;overflow:hidden;">Obergeschoss</div>
<div class="a t" style="top:176.8px;line-height:14px;left:1094px;width:68px;overflow:hidden;letter-spacing:-0.300px;">Obergeschoss</div>
<div class="a t" style="top:176.8px;line-height:14px;left:1176.5px;">OG 1</div>
<div class="a t i" style="top:176.8px;line-height:14px;right:449.5px;text-align:right;">96,00 m<span class="s3">²</span></div>
<div class="a t i" style="top:176.8px;line-height:14px;right:312.5px;text-align:right;">240,00 m<span class="s3">³</span></div>
<div class="a" style="left:843px;top:214px;width:15px;height:1px;background:#dadada;"></div>
<div class="a" style="left:938px;top:194px;width:807px;height:21px;background:#cecece;"></div>
<div class="a" style="left:938px;top:214px;width:807px;height:1px;background:#c2c2c2;"></div>
<div class="a" style="left:938px;top:194px;width:1px;height:21px;background:#c2c2c2;"></div>
<div class="a" style="left:1084px;top:194px;width:1px;height:21px;background:#c2c2c2;"></div>
<div class="a" style="left:1166px;top:194px;width:1px;height:21px;background:#c2c2c2;"></div>
<div class="a" style="left:1205px;top:194px;width:1px;height:21px;background:#c2c2c2;"></div>
<div class="a" style="left:1248px;top:194px;width:1px;height:21px;background:#c2c2c2;"></div>
<div class="a" style="left:1298px;top:194px;width:1px;height:21px;background:#c2c2c2;"></div>
<div class="a" style="left:1349px;top:194px;width:1px;height:21px;background:#c2c2c2;"></div>
<div class="a" style="left:1400px;top:194px;width:1px;height:21px;background:#c2c2c2;"></div>
<div class="a" style="left:1486px;top:194px;width:1px;height:21px;background:#c2c2c2;"></div>
<div class="a" style="left:1600px;top:194px;width:1px;height:21px;background:#c2c2c2;"></div>
<div class="a" style="left:1700px;top:194px;width:1px;height:21px;background:#c2c2c2;"></div>
<svg class="a" style="left:921px;top:196.2px;" width="16" height="16" viewBox="0 0 16 16"><path d="M1.500 1.500H15V15.500" stroke="#2a2f6a" stroke-width="1" fill="none"/><path d="M1.500 1.500V15.500" stroke="#2a2f6a" stroke-width="1" fill="none"/><path d="M1 15.200H8.500M12.500 15.200H15.500" stroke="#2a2f6a" stroke-width="1.600"/><rect x="4.500" y="0.600" width="7.500" height="2" rx="1" fill="#fff" stroke="#5a5f8a" stroke-width=".9"/><rect x="0.500" y="4.200" width="2.100" height="7.600" rx="1" fill="#fff" stroke="#5a5f8a" stroke-width=".9"/><path d="M8.500 15.200V9.500" stroke="#2a2f6a" stroke-width="1.100"/><path d="M8.500 9.500c2.600 0 4 2 4 5.500" stroke="#7a7a8a" stroke-width=".9" fill="none"/></svg>
<svg class="a" style="left:944px;top:196.2px;" width="16" height="16" viewBox="0 0 16 16"><path d="M0.600 9h14.800c0 3-2 5-5 5H5.600C2.600 14 .6 12 .6 9Z" fill="#707070"/><path d="M3.600 14.200h8.800v1H3.600z" fill="#707070"/><path d="M11.5 8.5V3c0-1.2-1-1.8-2-1.6L7.2 2.4" stroke="#9a9a9a" stroke-width="1.1" fill="none"/><path d="M8.6 1.6L6 4.6M7 5.2L5.6 7M8.2 4.6L7.6 6.6M9 3.6l.4 2" stroke="#9a9a9a" stroke-width=".7"/></svg>
<div class="a t" style="top:198px;line-height:14px;left:965px;width:119px;overflow:hidden;">Bad/Dusche/Umkleideraum</div>
<div class="a t" style="top:197.3px;line-height:14px;left:1094px;width:68px;overflow:hidden;">Bad/Dusche/U</div>
<div class="a t" style="top:197.3px;line-height:14px;left:1176.5px;">B</div>
<svg class="a" style="left:1214px;top:196.3px;" width="12" height="15.5" viewBox="0 0 13 16"><rect x="0.900" y="0.900" width="11.200" height="14.200" fill="#eeeef2" stroke="#8c8c90" stroke-width="1.800"/><path d="M6.500 .6V15.400M.6 8H12.400" stroke="#8c8c90" stroke-width="2.200"/></svg>
<svg class="a" style="left:1233px;top:197px;" width="14" height="14" viewBox="0 0 14 14"><rect x="0.5" y="0.5" width="13" height="13" fill="#fff" stroke="#707070"/><path d="M2.800 7.200L5.600 10.200L11.400 3.600" stroke="#1e1e1e" stroke-width="1.700" fill="none"/></svg>
<svg class="a" style="left:1267px;top:197px;" width="14" height="14" viewBox="0 0 14 14"><rect x="0.5" y="0.5" width="13" height="13" fill="#fff" stroke="#707070"/></svg>
<div class="a t" style="top:197.3px;line-height:14px;right:452.5px;text-align:right;">6,00 m<span class="s3">²</span></div>
<div class="a t" style="top:197.3px;line-height:14px;right:401px;text-align:right;">2,50 m</div>
<div class="a t" style="top:197.3px;line-height:14px;right:315.5px;text-align:right;">15,00 m<span class="s3">³</span></div>
<svg class="a" style="left:1601.7px;top:196.6px;" width="14.5" height="14.5" viewBox="0 0 16 16"><circle cx="8" cy="8" r="7" fill="url(#gGreen)"/><path d="M4.6 8.4L7 10.6L11.4 5.4" stroke="#fff" stroke-width="1.8" fill="none" stroke-linecap="round" stroke-linejoin="round"/></svg>
<div class="a t" style="top:197.3px;line-height:14px;right:102.7px;text-align:right;">17,0 m<span class="s3">³</span></div>
<svg class="a" style="left:1702px;top:196px;" width="13" height="16" viewBox="0 0 13 16"><rect x="0.500" y="0.500" width="12" height="15" fill="#5c9a5c" stroke="#4a7c4a" stroke-width="1"/><rect x="2" y="6" width="9" height="8.500" fill="#e8d8cc"/><path d="M2.400 14.500L3.600 7.800L5.200 11.200L6.500 7.500L7.800 11.200L9.400 7.800L10.600 14.500Z" fill="#e02020"/><path d="M3.400 14.500L4.300 12.600L5.200 14.500ZM7.800 14.500L8.700 12.600L9.600 14.500Z" fill="#f6d23a"/></svg>
<div class="a" style="left:843px;top:235px;width:15px;height:1px;background:#dadada;"></div>
<div class="a" style="left:958px;top:235px;width:787px;height:1px;background:#dadada;"></div>
<div class="a" style="left:958px;top:215px;width:1px;height:21px;background:#dadada;"></div>
<div class="a" style="left:1084px;top:215px;width:1px;height:21px;background:#dadada;"></div>
<div class="a" style="left:1166px;top:215px;width:1px;height:21px;background:#dadada;"></div>
<div class="a" style="left:1205px;top:215px;width:1px;height:21px;background:#dadada;"></div>
<div class="a" style="left:1248px;top:215px;width:1px;height:21px;background:#dadada;"></div>
<div class="a" style="left:1298px;top:215px;width:1px;height:21px;background:#dadada;"></div>
<div class="a" style="left:1349px;top:215px;width:1px;height:21px;background:#dadada;"></div>
<div class="a" style="left:1400px;top:215px;width:1px;height:21px;background:#dadada;"></div>
<div class="a" style="left:1486px;top:215px;width:1px;height:21px;background:#dadada;"></div>
<div class="a" style="left:1600px;top:215px;width:1px;height:21px;background:#dadada;"></div>
<div class="a" style="left:1700px;top:215px;width:1px;height:21px;background:#dadada;"></div>
<svg class="a" style="left:941px;top:217.2px;" width="16" height="16" viewBox="0 0 16 16"><path d="M1.500 1.500H15V15.500" stroke="#2a2f6a" stroke-width="1" fill="none"/><path d="M1.500 1.500V15.500" stroke="#2a2f6a" stroke-width="1" fill="none"/><path d="M1 15.200H8.500M12.500 15.200H15.500" stroke="#2a2f6a" stroke-width="1.600"/><rect x="4.500" y="0.600" width="7.500" height="2" rx="1" fill="#fff" stroke="#5a5f8a" stroke-width=".9"/><rect x="0.500" y="4.200" width="2.100" height="7.600" rx="1" fill="#fff" stroke="#5a5f8a" stroke-width=".9"/><path d="M8.500 15.200V9.500" stroke="#2a2f6a" stroke-width="1.100"/><path d="M8.500 9.500c2.600 0 4 2 4 5.500" stroke="#7a7a8a" stroke-width=".9" fill="none"/></svg>
<svg class="a" style="left:964px;top:217.2px;" width="16" height="16" viewBox="0 0 16 16"><path d="M1.5 15V11.5H5V8H8.5V4.5H12V1.5H15" stroke="#6e6e6e" stroke-width="1.8" fill="none"/></svg>
<div class="a t" style="top:219px;line-height:14px;left:985px;width:99px;overflow:hidden;">Flur</div>
<div class="a t" style="top:218.3px;line-height:14px;left:1094px;width:68px;overflow:hidden;">Flur</div>
<div class="a t" style="top:218.3px;line-height:14px;left:1176.5px;">FL</div>
<svg class="a" style="left:1214px;top:217.3px;" width="12" height="15.5" viewBox="0 0 13 16"><rect x="0.900" y="0.900" width="11.200" height="14.200" fill="#eeeef2" stroke="#8c8c90" stroke-width="1.800"/><path d="M6.500 .6V15.400M.6 8H12.400" stroke="#8c8c90" stroke-width="2.200"/><path d="M1 3.500L12 13.500M12 3.500L1 13.500" stroke="#e03030" stroke-width="1.4"/></svg>
<svg class="a" style="left:1233px;top:218px;" width="14" height="14" viewBox="0 0 14 14"><rect x="0.5" y="0.5" width="13" height="13" fill="#fff" stroke="#707070"/></svg>
<svg class="a" style="left:1267px;top:218px;" width="14" height="14" viewBox="0 0 14 14"><rect x="0.5" y="0.5" width="13" height="13" fill="#fff" stroke="#707070"/></svg>
<div class="a t" style="top:218.3px;line-height:14px;right:452.5px;text-align:right;">8,00 m<span class="s3">²</span></div>
<div class="a t" style="top:218.3px;line-height:14px;right:401px;text-align:right;">2,50 m</div>
<div class="a t" style="top:218.3px;line-height:14px;right:315.5px;text-align:right;">20,00 m<span class="s3">³</span></div>
<svg class="a" style="left:1495px;top:217.5px;" width="10" height="16" viewBox="0 0 10 16"><rect x="0.600" y="0.600" width="8.800" height="14.800" fill="#e88888" stroke="#3a7ac8" stroke-width="1.200"/><rect x="0.400" y="0.200" width="9.200" height="1.600" fill="#2a4a8a"/><rect x="0.400" y="14.200" width="9.200" height="1.600" fill="#2a4a8a"/><rect x="2.600" y="3" width="4.800" height="10" fill="#f0c8c8"/></svg>
<div class="a t" style="top:218.3px;line-height:14px;left:1513px;width:87px;overflow:hidden;">Öffnung 2 x 150 cm<span class="s3">²</span></div>
<div class="a" style="left:843px;top:256px;width:15px;height:1px;background:#dadada;"></div>
<div class="a" style="left:978px;top:256px;width:767px;height:1px;background:#dadada;"></div>
<div class="a" style="left:978px;top:236px;width:1px;height:21px;background:#dadada;"></div>
<div class="a" style="left:1084px;top:236px;width:1px;height:21px;background:#dadada;"></div>
<div class="a" style="left:1166px;top:236px;width:1px;height:21px;background:#dadada;"></div>
<div class="a" style="left:1205px;top:236px;width:1px;height:21px;background:#dadada;"></div>
<div class="a" style="left:1248px;top:236px;width:1px;height:21px;background:#dadada;"></div>
<div class="a" style="left:1298px;top:236px;width:1px;height:21px;background:#dadada;"></div>
<div class="a" style="left:1349px;top:236px;width:1px;height:21px;background:#dadada;"></div>
<div class="a" style="left:1400px;top:236px;width:1px;height:21px;background:#dadada;"></div>
<div class="a" style="left:1486px;top:236px;width:1px;height:21px;background:#dadada;"></div>
<div class="a" style="left:1600px;top:236px;width:1px;height:21px;background:#dadada;"></div>
<div class="a" style="left:1700px;top:236px;width:1px;height:21px;background:#dadada;"></div>
<svg class="a" style="left:961px;top:238.2px;" width="16" height="16" viewBox="0 0 16 16"><path d="M1.500 1.500H15V15.500" stroke="#2a2f6a" stroke-width="1" fill="none"/><path d="M1.500 1.500V15.500" stroke="#2a2f6a" stroke-width="1" fill="none"/><path d="M1 15.200H8.500M12.500 15.200H15.500" stroke="#2a2f6a" stroke-width="1.600"/><rect x="4.500" y="0.600" width="7.500" height="2" rx="1" fill="#fff" stroke="#5a5f8a" stroke-width=".9"/><rect x="0.500" y="4.200" width="2.100" height="7.600" rx="1" fill="#fff" stroke="#5a5f8a" stroke-width=".9"/><path d="M8.500 15.200V9.500" stroke="#2a2f6a" stroke-width="1.100"/><path d="M8.500 9.500c2.600 0 4 2 4 5.500" stroke="#7a7a8a" stroke-width=".9" fill="none"/></svg>
<svg class="a" style="left:984px;top:238.2px;" width="16" height="16" viewBox="0 0 16 16"><rect x="2" y="8" width="12" height="7" rx=".8" fill="#6e6e6e"/><path d="M1 7c0-2.6 3-3.8 7-3.8S15 4.4 15 7Z" fill="#6e6e6e"/><rect x="6.8" y="1" width="2.4" height="2.6" rx=".6" fill="#6e6e6e"/></svg>
<div class="a t" style="top:240px;line-height:14px;left:1005px;width:79px;overflow:hidden;">Küche</div>
<div class="a t" style="top:239.3px;line-height:14px;left:1094px;width:68px;overflow:hidden;">Küche</div>
<div class="a t" style="top:239.3px;line-height:14px;left:1176.5px;">KÜ</div>
<svg class="a" style="left:1214px;top:238.3px;" width="12" height="15.5" viewBox="0 0 13 16"><rect x="0.900" y="0.900" width="11.200" height="14.200" fill="#eeeef2" stroke="#8c8c90" stroke-width="1.800"/><path d="M6.500 .6V15.400M.6 8H12.400" stroke="#8c8c90" stroke-width="2.200"/></svg>
<svg class="a" style="left:1233px;top:239px;" width="14" height="14" viewBox="0 0 14 14"><rect x="0.5" y="0.5" width="13" height="13" fill="#fff" stroke="#707070"/><path d="M2.800 7.200L5.600 10.200L11.400 3.600" stroke="#1e1e1e" stroke-width="1.700" fill="none"/></svg>
<svg class="a" style="left:1267px;top:239px;" width="14" height="14" viewBox="0 0 14 14"><rect x="0.5" y="0.5" width="13" height="13" fill="#fff" stroke="#707070"/></svg>
<div class="a t" style="top:239.3px;line-height:14px;right:452.5px;text-align:right;">14,00...</div>
<div class="a t" style="top:239.3px;line-height:14px;right:401px;text-align:right;">2,50 m</div>
<div class="a t" style="top:239.3px;line-height:14px;right:315.5px;text-align:right;">35,00 m<span class="s3">³</span></div>
<svg class="a" style="left:1495px;top:238.5px;" width="10" height="16" viewBox="0 0 10 16"><rect x="0.600" y="0.600" width="8.800" height="14.800" fill="#b8b8b8" stroke="#d03a3a" stroke-width="1.200"/><rect x="1.200" y="0.400" width="7.600" height="1.400" fill="#d03a3a"/></svg>
<div class="a t" style="top:239.3px;line-height:14px;left:1513px;width:87px;overflow:hidden;">Innentür mit Dichtung</div>
<div class="a" style="left:843px;top:277px;width:15px;height:1px;background:#dadada;"></div>
<div class="a" style="left:978px;top:277px;width:767px;height:1px;background:#dadada;"></div>
<div class="a" style="left:978px;top:257px;width:1px;height:21px;background:#dadada;"></div>
<div class="a" style="left:1084px;top:257px;width:1px;height:21px;background:#dadada;"></div>
<div class="a" style="left:1166px;top:257px;width:1px;height:21px;background:#dadada;"></div>
<div class="a" style="left:1205px;top:257px;width:1px;height:21px;background:#dadada;"></div>
<div class="a" style="left:1248px;top:257px;width:1px;height:21px;background:#dadada;"></div>
<div class="a" style="left:1298px;top:257px;width:1px;height:21px;background:#dadada;"></div>
<div class="a" style="left:1349px;top:257px;width:1px;height:21px;background:#dadada;"></div>
<div class="a" style="left:1400px;top:257px;width:1px;height:21px;background:#dadada;"></div>
<div class="a" style="left:1486px;top:257px;width:1px;height:21px;background:#dadada;"></div>
<div class="a" style="left:1600px;top:257px;width:1px;height:21px;background:#dadada;"></div>
<div class="a" style="left:1700px;top:257px;width:1px;height:21px;background:#dadada;"></div>
<svg class="a" style="left:961px;top:259.2px;" width="16" height="16" viewBox="0 0 16 16"><path d="M1.500 1.500H15V15.500" stroke="#2a2f6a" stroke-width="1" fill="none"/><path d="M1.500 1.500V15.500" stroke="#2a2f6a" stroke-width="1" fill="none"/><path d="M1 15.200H8.500M12.500 15.200H15.500" stroke="#2a2f6a" stroke-width="1.600"/><rect x="4.500" y="0.600" width="7.500" height="2" rx="1" fill="#fff" stroke="#5a5f8a" stroke-width=".9"/><rect x="0.500" y="4.200" width="2.100" height="7.600" rx="1" fill="#fff" stroke="#5a5f8a" stroke-width=".9"/><path d="M8.500 15.200V9.500" stroke="#2a2f6a" stroke-width="1.100"/><path d="M8.500 9.500c2.600 0 4 2 4 5.500" stroke="#7a7a8a" stroke-width=".9" fill="none"/></svg>
<svg class="a" style="left:984px;top:259.2px;" width="16" height="16" viewBox="0 0 16 16"><rect x="1.5" y="3" width="13" height="3.4" rx=".6" fill="#6e6e6e"/><rect x="2.4" y="3.6" width="4.8" height="2.8" fill="#d8d8d8"/><rect x="8.8" y="3.6" width="4.8" height="2.8" fill="#d8d8d8"/><rect x="0.8" y="7" width="14.4" height="3.4" rx=".5" fill="#6e6e6e"/><path d="M1.6 10.4v1.6M14.4 10.4v1.6" stroke="#6e6e6e" stroke-width="1.2"/></svg>
<div class="a t" style="top:261px;line-height:14px;left:1005px;width:79px;overflow:hidden;">Schlafen</div>
<div class="a t" style="top:260.3px;line-height:14px;left:1094px;width:68px;overflow:hidden;">Schlafen</div>
<div class="a t" style="top:260.3px;line-height:14px;left:1176.5px;">SZ</div>
<svg class="a" style="left:1214px;top:259.3px;" width="12" height="15.5" viewBox="0 0 13 16"><rect x="0.900" y="0.900" width="11.200" height="14.200" fill="#eeeef2" stroke="#8c8c90" stroke-width="1.800"/><path d="M6.500 .6V15.400M.6 8H12.400" stroke="#8c8c90" stroke-width="2.200"/></svg>
<svg class="a" style="left:1233px;top:260px;" width="14" height="14" viewBox="0 0 14 14"><rect x="0.5" y="0.5" width="13" height="13" fill="#fff" stroke="#707070"/><path d="M2.800 7.200L5.600 10.200L11.400 3.600" stroke="#1e1e1e" stroke-width="1.700" fill="none"/></svg>
<svg class="a" style="left:1267px;top:260px;" width="14" height="14" viewBox="0 0 14 14"><rect x="0.5" y="0.5" width="13" height="13" fill="#fff" stroke="#707070"/></svg>
<div class="a t" style="top:260.3px;line-height:14px;right:452.5px;text-align:right;">18,00...</div>
<div class="a t" style="top:260.3px;line-height:14px;right:401px;text-align:right;">2,50 m</div>
<div class="a t" style="top:260.3px;line-height:14px;right:315.5px;text-align:right;">45,00 m<span class="s3">³</span></div>
<svg class="a" style="left:1495px;top:259.5px;" width="10" height="16" viewBox="0 0 10 16"><rect x="0.600" y="0.600" width="8.800" height="14.800" fill="#b8b8b8" stroke="#d03a3a" stroke-width="1.200"/><rect x="1.200" y="0.400" width="7.600" height="1.400" fill="#d03a3a"/></svg>
<div class="a t" style="top:260.3px;line-height:14px;left:1513px;width:87px;overflow:hidden;">Innentür mit Dichtung</div>
<div class="a" style="left:843px;top:298px;width:15px;height:1px;background:#dadada;"></div>
<div class="a" style="left:998px;top:298px;width:747px;height:1px;background:#dadada;"></div>
<div class="a" style="left:998px;top:278px;width:1px;height:21px;background:#dadada;"></div>
<div class="a" style="left:1084px;top:278px;width:1px;height:21px;background:#dadada;"></div>
<div class="a" style="left:1166px;top:278px;width:1px;height:21px;background:#dadada;"></div>
<div class="a" style="left:1205px;top:278px;width:1px;height:21px;background:#dadada;"></div>
<div class="a" style="left:1248px;top:278px;width:1px;height:21px;background:#dadada;"></div>
<div class="a" style="left:1298px;top:278px;width:1px;height:21px;background:#dadada;"></div>
<div class="a" style="left:1349px;top:278px;width:1px;height:21px;background:#dadada;"></div>
<div class="a" style="left:1400px;top:278px;width:1px;height:21px;background:#dadada;"></div>
<div class="a" style="left:1486px;top:278px;width:1px;height:21px;background:#dadada;"></div>
<div class="a" style="left:1600px;top:278px;width:1px;height:21px;background:#dadada;"></div>
<div class="a" style="left:1700px;top:278px;width:1px;height:21px;background:#dadada;"></div>
<svg class="a" style="left:981px;top:280.2px;" width="16" height="16" viewBox="0 0 16 16"><path d="M1.500 1.500H15V15.500" stroke="#2a2f6a" stroke-width="1" fill="none"/><path d="M1.500 1.500V15.500" stroke="#2a2f6a" stroke-width="1" fill="none"/><path d="M1 15.200H8.500M12.500 15.200H15.500" stroke="#2a2f6a" stroke-width="1.600"/><rect x="4.500" y="0.600" width="7.500" height="2" rx="1" fill="#fff" stroke="#5a5f8a" stroke-width=".9"/><rect x="0.500" y="4.200" width="2.100" height="7.600" rx="1" fill="#fff" stroke="#5a5f8a" stroke-width=".9"/><path d="M8.500 15.200V9.500" stroke="#2a2f6a" stroke-width="1.100"/><path d="M8.500 9.500c2.600 0 4 2 4 5.500" stroke="#7a7a8a" stroke-width=".9" fill="none"/></svg>
<svg class="a" style="left:1004px;top:280.2px;" width="16" height="16" viewBox="0 0 16 16"><rect x="1.5" y="11" width="2.6" height="2.6" fill="#6e6e6e"/><rect x="6.7" y="11" width="2.6" height="2.6" fill="#6e6e6e"/><rect x="11.9" y="11" width="2.6" height="2.6" fill="#6e6e6e"/></svg>
<div class="a t" style="top:282px;line-height:14px;left:1025px;width:59px;overflow:hidden;">Sonstige</div>
<div class="a t" style="top:281.3px;line-height:14px;left:1094px;width:68px;overflow:hidden;">Ankleide</div>
<div class="a t" style="top:281.3px;line-height:14px;left:1176.5px;">SO</div>
<svg class="a" style="left:1214px;top:280.3px;" width="12" height="15.5" viewBox="0 0 13 16"><rect x="0.900" y="0.900" width="11.200" height="14.200" fill="#eeeef2" stroke="#8c8c90" stroke-width="1.800"/><path d="M6.500 .6V15.400M.6 8H12.400" stroke="#8c8c90" stroke-width="2.200"/></svg>
<svg class="a" style="left:1233px;top:281px;" width="14" height="14" viewBox="0 0 14 14"><rect x="0.5" y="0.5" width="13" height="13" fill="#fff" stroke="#707070"/><path d="M2.800 7.200L5.600 10.200L11.400 3.600" stroke="#1e1e1e" stroke-width="1.700" fill="none"/></svg>
<svg class="a" style="left:1267px;top:281px;" width="14" height="14" viewBox="0 0 14 14"><rect x="0.5" y="0.5" width="13" height="13" fill="#fff" stroke="#707070"/></svg>
<div class="a t" style="top:281.3px;line-height:14px;right:452.5px;text-align:right;">6,00 m<span class="s3">²</span></div>
<div class="a t" style="top:281.3px;line-height:14px;right:401px;text-align:right;">2,50 m</div>
<div class="a t" style="top:281.3px;line-height:14px;right:315.5px;text-align:right;">15,00 m<span class="s3">³</span></div>
<svg class="a" style="left:1495px;top:280.5px;" width="10" height="16" viewBox="0 0 10 16"><rect x="0.600" y="0.600" width="8.800" height="14.800" fill="#b8b8b8" stroke="#d03a3a" stroke-width="1.200"/><rect x="1.200" y="0.400" width="7.600" height="1.400" fill="#d03a3a"/></svg>
<div class="a t" style="top:281.3px;line-height:14px;left:1513px;width:87px;overflow:hidden;">Innentür mit Dichtung</div>
<div class="a" style="left:843px;top:319px;width:15px;height:1px;background:#dadada;"></div>
<div class="a" style="left:978px;top:319px;width:767px;height:1px;background:#dadada;"></div>
<div class="a" style="left:978px;top:299px;width:1px;height:21px;background:#dadada;"></div>
<div class="a" style="left:1084px;top:299px;width:1px;height:21px;background:#dadada;"></div>
<div class="a" style="left:1166px;top:299px;width:1px;height:21px;background:#dadada;"></div>
<div class="a" style="left:1205px;top:299px;width:1px;height:21px;background:#dadada;"></div>
<div class="a" style="left:1248px;top:299px;width:1px;height:21px;background:#dadada;"></div>
<div class="a" style="left:1298px;top:299px;width:1px;height:21px;background:#dadada;"></div>
<div class="a" style="left:1349px;top:299px;width:1px;height:21px;background:#dadada;"></div>
<div class="a" style="left:1400px;top:299px;width:1px;height:21px;background:#dadada;"></div>
<div class="a" style="left:1486px;top:299px;width:1px;height:21px;background:#dadada;"></div>
<div class="a" style="left:1600px;top:299px;width:1px;height:21px;background:#dadada;"></div>
<div class="a" style="left:1700px;top:299px;width:1px;height:21px;background:#dadada;"></div>
<svg class="a" style="left:961px;top:301.2px;" width="16" height="16" viewBox="0 0 16 16"><path d="M1.500 1.500H15V15.500" stroke="#2a2f6a" stroke-width="1" fill="none"/><path d="M1.500 1.500V15.500" stroke="#2a2f6a" stroke-width="1" fill="none"/><path d="M1 15.200H8.500M12.500 15.200H15.500" stroke="#2a2f6a" stroke-width="1.600"/><rect x="4.500" y="0.600" width="7.500" height="2" rx="1" fill="#fff" stroke="#5a5f8a" stroke-width=".9"/><rect x="0.500" y="4.200" width="2.100" height="7.600" rx="1" fill="#fff" stroke="#5a5f8a" stroke-width=".9"/><path d="M8.500 15.200V9.500" stroke="#2a2f6a" stroke-width="1.100"/><path d="M8.500 9.500c2.600 0 4 2 4 5.500" stroke="#7a7a8a" stroke-width=".9" fill="none"/></svg>
<svg class="a" style="left:984px;top:301.2px;" width="16" height="16" viewBox="0 0 16 16"><path d="M3.5 2.5h9c.8 0 1.2.6 1.2 1.2V8H2.3V3.7c0-.6.4-1.2 1.2-1.2Z" fill="#6e6e6e"/><path d="M.8 6.6c0-1 2.4-1 2.4 0V9.4c2.4 1.2 7.2 1.2 9.6 0V6.6c0-1 2.4-1 2.4 0V12c0 .8-.6 1.2-1.2 1.2H2C1.4 13.200 .8 12.800 .8 12Z" fill="#6e6e6e" stroke="#fff" stroke-width=".6"/><path d="M2.6 13.2v1.2M13.4 13.2v1.2" stroke="#6e6e6e" stroke-width="1.4"/></svg>
<div class="a t" style="top:303px;line-height:14px;left:1005px;width:79px;overflow:hidden;">Wohnraum</div>
<div class="a t" style="top:302.3px;line-height:14px;left:1094px;width:68px;overflow:hidden;">Wohnraum</div>
<div class="a t" style="top:302.3px;line-height:14px;left:1176.5px;">WZ</div>
<svg class="a" style="left:1214px;top:301.3px;" width="12" height="15.5" viewBox="0 0 13 16"><rect x="0.900" y="0.900" width="11.200" height="14.200" fill="#eeeef2" stroke="#8c8c90" stroke-width="1.800"/><path d="M6.500 .6V15.400M.6 8H12.400" stroke="#8c8c90" stroke-width="2.200"/></svg>
<svg class="a" style="left:1233px;top:302px;" width="14" height="14" viewBox="0 0 14 14"><rect x="0.5" y="0.5" width="13" height="13" fill="#fff" stroke="#707070"/><path d="M2.800 7.200L5.600 10.200L11.400 3.600" stroke="#1e1e1e" stroke-width="1.700" fill="none"/></svg>
<svg class="a" style="left:1267px;top:302px;" width="14" height="14" viewBox="0 0 14 14"><rect x="0.5" y="0.5" width="13" height="13" fill="#fff" stroke="#707070"/></svg>
<div class="a t" style="top:302.3px;line-height:14px;right:452.5px;text-align:right;">26,00...</div>
<div class="a t" style="top:302.3px;line-height:14px;right:401px;text-align:right;">2,50 m</div>
<div class="a t" style="top:302.3px;line-height:14px;right:315.5px;text-align:right;">65,00 m<span class="s3">³</span></div>
<svg class="a" style="left:1495px;top:301.5px;" width="10" height="16" viewBox="0 0 10 16"><rect x="0.600" y="0.600" width="8.800" height="14.800" fill="#b8b8b8" stroke="#d03a3a" stroke-width="1.200"/><rect x="1.200" y="0.400" width="7.600" height="1.400" fill="#d03a3a"/></svg>
<div class="a t" style="top:302.3px;line-height:14px;left:1513px;width:87px;overflow:hidden;">Innentür mit Dichtung</div>
<div class="a" style="left:843px;top:340px;width:15px;height:1px;background:#dadada;"></div>
<div class="a" style="left:978px;top:340px;width:767px;height:1px;background:#dadada;"></div>
<div class="a" style="left:978px;top:320px;width:1px;height:21px;background:#dadada;"></div>
<div class="a" style="left:1084px;top:320px;width:1px;height:21px;background:#dadada;"></div>
<div class="a" style="left:1166px;top:320px;width:1px;height:21px;background:#dadada;"></div>
<div class="a" style="left:1205px;top:320px;width:1px;height:21px;background:#dadada;"></div>
<div class="a" style="left:1248px;top:320px;width:1px;height:21px;background:#dadada;"></div>
<div class="a" style="left:1298px;top:320px;width:1px;height:21px;background:#dadada;"></div>
<div class="a" style="left:1349px;top:320px;width:1px;height:21px;background:#dadada;"></div>
<div class="a" style="left:1400px;top:320px;width:1px;height:21px;background:#dadada;"></div>
<div class="a" style="left:1486px;top:320px;width:1px;height:21px;background:#dadada;"></div>
<div class="a" style="left:1600px;top:320px;width:1px;height:21px;background:#dadada;"></div>
<div class="a" style="left:1700px;top:320px;width:1px;height:21px;background:#dadada;"></div>
<svg class="a" style="left:961px;top:322.2px;" width="16" height="16" viewBox="0 0 16 16"><path d="M1.500 1.500H15V15.500" stroke="#2a2f6a" stroke-width="1" fill="none"/><path d="M1.500 1.500V15.500" stroke="#2a2f6a" stroke-width="1" fill="none"/><path d="M1 15.200H8.500M12.500 15.200H15.500" stroke="#2a2f6a" stroke-width="1.600"/><rect x="4.500" y="0.600" width="7.500" height="2" rx="1" fill="#fff" stroke="#5a5f8a" stroke-width=".9"/><rect x="0.500" y="4.200" width="2.100" height="7.600" rx="1" fill="#fff" stroke="#5a5f8a" stroke-width=".9"/><path d="M8.500 15.200V9.500" stroke="#2a2f6a" stroke-width="1.100"/><path d="M8.500 9.500c2.600 0 4 2 4 5.500" stroke="#7a7a8a" stroke-width=".9" fill="none"/></svg>
<svg class="a" style="left:984px;top:322.2px;" width="16" height="16" viewBox="0 0 16 16"><circle cx="8" cy="2.8" r="2" fill="#6e6e6e"/><path d="M8 5c-3 0-5 2.400-5.600 4.400l1.400.6C4.600 8.600 5.600 7.600 6.600 7.400L6 10.200h4L9.400 7.400c1 .2 2 1.200 2.800 2.600l1.400-.6C13 7.400 11 5 8 5Z" fill="#6e6e6e"/><path d="M5.400 10.800L3.400 13l2 2.200M10.600 10.800L12.600 13l-2 2.200" stroke="#6e6e6e" stroke-width="1.2" fill="none"/></svg>
<div class="a t" style="top:324px;line-height:14px;left:1005px;width:79px;overflow:hidden;">Kind</div>
<div class="a t" style="top:323.3px;line-height:14px;left:1094px;width:68px;overflow:hidden;">Kind</div>
<div class="a t" style="top:323.3px;line-height:14px;left:1176.5px;">KI</div>
<svg class="a" style="left:1214px;top:322.3px;" width="12" height="15.5" viewBox="0 0 13 16"><rect x="0.900" y="0.900" width="11.200" height="14.200" fill="#eeeef2" stroke="#8c8c90" stroke-width="1.800"/><path d="M6.500 .6V15.400M.6 8H12.400" stroke="#8c8c90" stroke-width="2.200"/></svg>
<svg class="a" style="left:1233px;top:323px;" width="14" height="14" viewBox="0 0 14 14"><rect x="0.5" y="0.5" width="13" height="13" fill="#fff" stroke="#707070"/><path d="M2.800 7.200L5.600 10.200L11.400 3.600" stroke="#1e1e1e" stroke-width="1.700" fill="none"/></svg>
<svg class="a" style="left:1267px;top:323px;" width="14" height="14" viewBox="0 0 14 14"><rect x="0.5" y="0.5" width="13" height="13" fill="#fff" stroke="#707070"/></svg>
<div class="a t" style="top:323.3px;line-height:14px;right:452.5px;text-align:right;">18,00...</div>
<div class="a t" style="top:323.3px;line-height:14px;right:401px;text-align:right;">2,50 m</div>
<div class="a t" style="top:323.3px;line-height:14px;right:315.5px;text-align:right;">45,00 m<span class="s3">³</span></div>
<svg class="a" style="left:1495px;top:322.5px;" width="10" height="16" viewBox="0 0 10 16"><rect x="0.600" y="0.600" width="8.800" height="14.800" fill="#b8b8b8" stroke="#d03a3a" stroke-width="1.200"/><rect x="1.200" y="0.400" width="7.600" height="1.400" fill="#d03a3a"/></svg>
<div class="a t" style="top:323.3px;line-height:14px;left:1513px;width:87px;overflow:hidden;">Innentür mit Dichtung</div>
<svg class="a" style="left:867px;top:163px;" width="6" height="6" viewBox="0 0 6 6"><path d="M6 0V6H0Z" fill="#5a5a5a"/></svg>
<div class="a" style="left:874px;top:165px;width:7px;height:1px;background:#b8b8b8;"></div>
<svg class="a" style="left:887px;top:183px;" width="6" height="6" viewBox="0 0 6 6"><path d="M6 0V6H0Z" fill="#5a5a5a"/></svg>
<div class="a" style="left:894px;top:185px;width:7px;height:1px;background:#b8b8b8;"></div>
<svg class="a" style="left:907px;top:203.5px;" width="6" height="6" viewBox="0 0 6 6"><path d="M6 0V6H0Z" fill="#5a5a5a"/></svg>
<div class="a" style="left:914px;top:205px;width:7px;height:1px;background:#b8b8b8;"></div>
<svg class="a" style="left:927px;top:224.5px;" width="6" height="6" viewBox="0 0 6 6"><path d="M6 0V6H0Z" fill="#5a5a5a"/></svg>
<div class="a" style="left:934px;top:226px;width:7px;height:1px;background:#b8b8b8;"></div>
<svg class="a" style="left:947px;top:266.5px;" width="6" height="6" viewBox="0 0 6 6"><path d="M6 0V6H0Z" fill="#5a5a5a"/></svg>
<div class="a" style="left:954px;top:268px;width:7px;height:1px;background:#b8b8b8;"></div>
<div class="a" style="left:887px;top:175px;width:1px;height:13px;background:#b8b8b8;"></div>
<div class="a" style="left:887px;top:188px;width:2px;height:1px;background:#b8b8b8;"></div>
<div class="a" style="left:907px;top:195px;width:1px;height:13px;background:#b8b8b8;"></div>
<div class="a" style="left:907px;top:208px;width:2px;height:1px;background:#b8b8b8;"></div>
<div class="a" style="left:927px;top:216px;width:1px;height:13px;background:#b8b8b8;"></div>
<div class="a" style="left:927px;top:229px;width:2px;height:1px;background:#b8b8b8;"></div>
<div class="a" style="left:948px;top:236px;width:1px;height:95px;background:#b8b8b8;"></div>
<div class="a" style="left:948px;top:246px;width:12px;height:1px;background:#b8b8b8;"></div>
<div class="a" style="left:948px;top:309px;width:12px;height:1px;background:#b8b8b8;"></div>
<div class="a" style="left:948px;top:330px;width:12px;height:1px;background:#b8b8b8;"></div>
<div class="a" style="left:968px;top:278px;width:1px;height:11px;background:#b8b8b8;"></div>
<div class="a" style="left:968px;top:288px;width:12px;height:1px;background:#b8b8b8;"></div>
<div class="a" style="left:1746px;top:154px;width:16px;height:300px;background:#f0f0f0;"></div>
<svg class="a" style="left:1749.5px;top:160.5px;" width="9" height="7" viewBox="0 0 9 7"><path d="M0.800 5.500L4.500 1.800L8.200 5.500" stroke="#b8b8b8" stroke-width="1.500" fill="none"/></svg>
<svg class="a" style="left:1749.5px;top:442.5px;" width="9" height="7" viewBox="0 0 9 7"><path d="M0.800 1.500L4.500 5.200L8.200 1.500" stroke="#b8b8b8" stroke-width="1.500" fill="none"/></svg>
<div class="a" style="left:842px;top:460px;width:122px;height:25px;background:#ebebeb;border:1px solid #adadad;box-sizing:border-box;"></div>
<svg class="a" style="left:848px;top:463.8px;" width="16" height="16" viewBox="0 0 16 16"><rect x="0.500" y="0.500" width="8" height="9" fill="url(#gBox)" stroke="#5e5e5e"/><path d="M0.500 4.800h8" stroke="#5e5e5e"/><rect x="1" y="1" width="7" height="1.600" fill="#fdfdfd"/><rect x="1" y="5.300" width="7" height="1.400" fill="#fdfdfd"/><path d="M3.800 14V10.500" stroke="#2878b0" stroke-width="1.500" fill="none"/><path d="M1.200 11.600L3.800 8.800L6.400 11.600Z" fill="#2878b0"/><path d="M3.100 14.300h5" stroke="#2878b0" stroke-width="1.500"/><rect x="8" y="11.800" width="8" height="4.400" fill="#4a94c8" stroke="#2a6a9a" stroke-width=".9"/></svg>
<div class="a t" style="top:465.8px;line-height:14px;left:811.5px;width:200px;text-align:center;">Raum hinzufügen</div>
<div class="a" style="left:969px;top:460px;width:115px;height:25px;background:#ebebeb;border:1px solid #adadad;box-sizing:border-box;"></div>
<svg class="a" style="left:975px;top:463.8px;" width="16" height="16" viewBox="0 0 16 16"><rect x="0.500" y="0.500" width="9" height="15.500" fill="url(#gBox)" stroke="#6a6a6a"/><rect x="1" y="1" width="8" height="3.600" fill="#fbfbfb"/><rect x="1" y="11.600" width="8" height="3.800" fill="#fbfbfb"/><rect x="0.500" y="6.200" width="10.500" height="4.100" fill="#3c88bc" stroke="#2a6a9a" stroke-width=".8"/><path d="M11 5.300L14.800 8.250L11 11.200Z" fill="#2f7fb8"/></svg>
<div class="a t" style="top:465.8px;line-height:14px;left:935px;width:200px;text-align:center;">Raum entfernen</div>
<div class="a" style="left:1114px;top:460px;width:139px;height:25px;background:#ebebeb;border:1px solid #adadad;box-sizing:border-box;"></div>
<svg class="a" style="left:1120px;top:463.8px;" width="16" height="16" viewBox="0 0 16 16"><rect x="0.500" y="0.500" width="8" height="9" fill="url(#gBox)" stroke="#5e5e5e"/><path d="M0.500 4.800h8" stroke="#5e5e5e"/><rect x="1" y="1" width="7" height="1.600" fill="#fdfdfd"/><rect x="1" y="5.300" width="7" height="1.400" fill="#fdfdfd"/><path d="M3.800 14V10.500" stroke="#2878b0" stroke-width="1.500" fill="none"/><path d="M1.200 11.600L3.800 8.800L6.400 11.600Z" fill="#2878b0"/><path d="M3.100 14.300h5" stroke="#2878b0" stroke-width="1.500"/><rect x="8" y="11.800" width="8" height="4.400" fill="#4a94c8" stroke="#2a6a9a" stroke-width=".9"/></svg>
<div class="a t" style="top:465.8px;line-height:14px;left:1092px;width:200px;text-align:center;">Geschoss hinzufügen</div>
<div class="a" style="left:1258px;top:460px;width:132px;height:25px;background:#ebebeb;border:1px solid #adadad;box-sizing:border-box;"></div>
<svg class="a" style="left:1264px;top:463.8px;" width="16" height="16" viewBox="0 0 16 16"><rect x="0.500" y="0.500" width="9" height="15.500" fill="url(#gBox)" stroke="#6a6a6a"/><rect x="1" y="1" width="8" height="3.600" fill="#fbfbfb"/><rect x="1" y="11.600" width="8" height="3.800" fill="#fbfbfb"/><rect x="0.500" y="6.200" width="10.500" height="4.100" fill="#3c88bc" stroke="#2a6a9a" stroke-width=".8"/><path d="M11 5.300L14.800 8.250L11 11.200Z" fill="#2f7fb8"/></svg>
<div class="a t" style="top:465.8px;line-height:14px;left:1233px;width:200px;text-align:center;">Geschoss entfernen</div>
<div class="a" style="left:1672px;top:460px;width:27px;height:25px;background:#ececec;border:1px solid #9a9a9a;box-sizing:border-box;"></div>
<svg class="a" style="left:1677px;top:463px;" width="17" height="18" viewBox="0 0 17 18"><rect x="1.300" y="1" width="7.500" height="4.500" fill="#f7c65e" stroke="#d89a30" stroke-width=".8"/><path d="M5.500 5.500v9M5.500 9.200h3" stroke="#9aa0b8" stroke-width=".9" fill="none"/><rect x="8.300" y="7.500" width="7.500" height="4" rx=".8" fill="#d4daf0" stroke="#9aa4d0" stroke-width=".8"/><rect x="8.300" y="12.400" width="7.500" height="4.800" rx=".8" fill="#d4daf0" stroke="#9aa4d0" stroke-width=".8"/></svg>
<div class="a" style="left:1704px;top:460px;width:27px;height:25px;background:#d0d0d0;border:1px solid #cacaca;box-sizing:border-box;"></div>
<svg class="a" style="left:1710px;top:464px;" width="17" height="17" viewBox="0 0 17 17"><rect x="0.500" y="0.500" width="8.500" height="16" fill="#fafafa" stroke="#9a9a9a" stroke-width="1"/><rect x="0.500" y="11.500" width="8.500" height="5" fill="url(#gRow)"/><path d="M0 0.500H9.500M0 5.800H9.500M0 11.200H9.500M0 16.500H9.500" stroke="#2a2a2a" stroke-width="1.200"/><path d="M13.500 14.500V4" stroke="#3a3a3a" stroke-width="1" fill="none"/><path d="M11 5.500L13.500 2.500L16 5.500Z" fill="#3a3a3a"/></svg>
<div class="a" style="left:1736px;top:460px;width:27px;height:25px;background:#d0d0d0;border:1px solid #cacaca;box-sizing:border-box;"></div>
<svg class="a" style="left:1742px;top:464px;" width="17" height="17" viewBox="0 0 17 17"><rect x="0.500" y="0.500" width="8.500" height="16" fill="#fafafa" stroke="#9a9a9a" stroke-width="1"/><rect x="0.500" y="0.500" width="8.500" height="5" fill="url(#gRow)"/><path d="M0 0.500H9.500M0 5.800H9.500M0 11.200H9.500M0 16.500H9.500" stroke="#2a2a2a" stroke-width="1.200"/><path d="M13.500 2V12" stroke="#3a3a3a" stroke-width="1" fill="none"/><path d="M11 10.500L13.500 13.500L16 10.500Z" fill="#3a3a3a"/></svg>
<div class="a" style="left:1288px;top:498px;width:2px;height:2px;background:#111;"></div>
<div class="a" style="left:1292px;top:498px;width:2px;height:2px;background:#111;"></div>
<div class="a" style="left:1296px;top:498px;width:2px;height:2px;background:#111;"></div>
<div class="a" style="left:1300px;top:498px;width:2px;height:2px;background:#111;"></div>
<div class="a" style="left:1304px;top:498px;width:2px;height:2px;background:#111;"></div>
<div class="a" style="left:1308px;top:498px;width:2px;height:2px;background:#111;"></div>
<div class="a" style="left:1312px;top:498px;width:2px;height:2px;background:#111;"></div>
<div class="a" style="left:1316px;top:498px;width:2px;height:2px;background:#111;"></div>
<div class="a" style="left:827px;top:483px;width:2px;height:2px;background:#111;"></div>
<div class="a" style="left:827px;top:487px;width:2px;height:2px;background:#111;"></div>
<div class="a" style="left:827px;top:491px;width:2px;height:2px;background:#111;"></div>
<div class="a" style="left:827px;top:495px;width:2px;height:2px;background:#111;"></div>
<div class="a" style="left:827px;top:499px;width:2px;height:2px;background:#111;"></div>
<div class="a" style="left:827px;top:503px;width:2px;height:2px;background:#111;"></div>
<div class="a" style="left:827px;top:507px;width:2px;height:2px;background:#111;"></div>
<div class="a" style="left:827px;top:511px;width:2px;height:2px;background:#111;"></div>
<div class="a" style="left:830px;top:501px;width:945px;height:399px;background:#fff;border:1px solid #d4d4d4;box-sizing:border-box;"></div>
<div class="a" style="left:831px;top:502px;width:943px;height:23px;background:#ececec;"></div>
<div class="a b" style="top:506.8px;line-height:14px;left:842.5px;">Raumdetails</div>
<div class="a" style="left:842px;top:537px;width:304px;height:321px;background:#fff;border:1px solid #d4d4d4;box-sizing:border-box;"></div>
<div class="a" style="left:843px;top:538px;width:302px;height:23px;background:#ececec;"></div>
<div class="a b" style="top:542.8px;line-height:14px;left:854.5px;">Geometrie</div>
<div class="a" style="left:1151px;top:537px;width:303px;height:321px;background:#fff;border:1px solid #d4d4d4;box-sizing:border-box;"></div>
<div class="a" style="left:1152px;top:538px;width:301px;height:23px;background:#ececec;"></div>
<div class="a b" style="top:542.8px;line-height:14px;left:1163.5px;">Elemente</div>
<div class="a" style="left:1459px;top:537px;width:304px;height:321px;background:#fff;border:1px solid #d4d4d4;box-sizing:border-box;"></div>
<div class="a" style="left:1460px;top:538px;width:302px;height:23px;background:#ececec;"></div>
<div class="a b" style="top:542.8px;line-height:14px;left:1471.5px;">Bilanz</div>
<div class="a t" style="top:577px;line-height:14px;left:854px;">Raumart</div>
<div class="a t" style="top:604px;line-height:14px;left:854px;">Fläche</div>
<div class="a t" style="top:604px;line-height:14px;left:974px;">6,00 m<span class="s3">²</span></div>
<div class="a t" style="top:631px;line-height:14px;left:854px;">Höhe</div>
<div class="a t" style="top:631px;line-height:14px;left:974px;">2,50 m</div>
<div class="a t" style="top:658px;line-height:14px;left:854px;">Volumen</div>
<div class="a t" style="top:658px;line-height:14px;left:974px;">15,00 m<span class="s3">³</span></div>
<svg class="a" style="left:972px;top:575.5px;" width="16" height="16" viewBox="0 0 16 16"><path d="M0.600 9h14.800c0 3-2 5-5 5H5.600C2.600 14 .6 12 .6 9Z" fill="#707070"/><path d="M3.600 14.200h8.800v1H3.600z" fill="#707070"/><path d="M11.5 8.5V3c0-1.2-1-1.8-2-1.6L7.2 2.4" stroke="#9a9a9a" stroke-width="1.1" fill="none"/><path d="M8.6 1.6L6 4.6M7 5.2L5.6 7M8.2 4.6L7.6 6.6M9 3.6l.4 2" stroke="#9a9a9a" stroke-width=".7"/></svg>
<div class="a t" style="top:577px;line-height:14px;left:995px;">Bad/Dusche/Umkleideraum</div>
<div class="a t" style="top:577px;line-height:14px;left:1163px;">Fenster</div>
<div class="a t" style="top:604px;line-height:14px;left:1163px;">Außentür</div>
<div class="a t" style="top:604px;line-height:14px;left:1281px;">nicht vorhanden</div>
<div class="a t" style="top:631px;line-height:14px;left:1163px;">Türtyp</div>
<div class="a t" style="top:658px;line-height:14px;left:1163px;">Zuluft</div>
<div class="a t" style="top:658px;line-height:14px;left:1281px;">nicht vorhanden</div>
<div class="a t" style="top:685px;line-height:14px;left:1163px;">Abluft</div>
<div class="a t" style="top:685px;line-height:14px;left:1281px;">nicht vorhanden</div>
<div class="a t" style="top:712px;line-height:14px;left:1163px;">Feuerstätte</div>
<svg class="a" style="left:1282px;top:576px;" width="13" height="16" viewBox="0 0 13 16"><rect x="0.900" y="0.900" width="11.200" height="14.200" fill="#eeeef2" stroke="#8c8c90" stroke-width="1.800"/><path d="M6.500 .6V15.400M.6 8H12.400" stroke="#8c8c90" stroke-width="2.200"/></svg>
<div class="a t" style="top:577px;line-height:14px;left:1302px;">Vorhanden</div>
<div class="a t" style="top:712px;line-height:14px;left:1285px;">1 x</div>
<svg class="a" style="left:1304px;top:711px;" width="13" height="16" viewBox="0 0 13 16"><rect x="0.500" y="0.500" width="12" height="15" fill="#5c9a5c" stroke="#4a7c4a" stroke-width="1"/><rect x="2" y="6" width="9" height="8.500" fill="#e8d8cc"/><path d="M2.400 14.500L3.600 7.800L5.200 11.200L6.500 7.500L7.800 11.200L9.400 7.800L10.600 14.500Z" fill="#e02020"/><path d="M3.400 14.500L4.300 12.600L5.200 14.500ZM7.800 14.500L8.700 12.600L9.600 14.500Z" fill="#f6d23a"/></svg>
<div class="a t" style="top:712px;line-height:14px;left:1319px;word-spacing:0.300px;">, Σ 18,00 kW (fiktiv)</div>
<div class="a b" style="top:577px;line-height:14px;left:1471px;"><span class="bq">q</span><span class="bs">S</span></div>
<div class="a t" style="top:604.6px;line-height:14px;left:1471px;">Anrechenbar</div>
<div class="a t" style="top:631.4px;line-height:14px;left:1471px;">Benötigt</div>
<div class="a t" style="top:657.7px;line-height:14px;left:1471px;">Raumbilanz</div>
<div class="a t" style="top:576.7px;line-height:14px;left:1591px;">2,9 m<span class="s3">³</span>/h</div>
<div class="a t" style="top:603.7px;line-height:14px;left:1591px;">2,9 m<span class="s3">³</span>/h</div>
<div class="a t" style="top:630.7px;line-height:14px;left:1591px;">28,8 m<span class="s3">³</span>/h</div>
<div class="a t" style="top:657.7px;line-height:14px;left:1591px;">-25,9 m<span class="s3">³</span>/h</div>
<svg class="a" style="left:1569.5px;top:603.5px;" width="15" height="15" viewBox="0 0 16 16"><circle cx="8" cy="8" r="7" fill="url(#gBlue)"/><path d="M8 4.8V11.2M4.8 8H11.2" stroke="#fff" stroke-width="2"/></svg>
<svg class="a" style="left:1569.5px;top:630.5px;" width="15" height="15" viewBox="0 0 16 16"><circle cx="8" cy="8" r="7" fill="url(#gBlue)"/><path d="M8 4.8V11.2M4.8 8H11.2" stroke="#fff" stroke-width="2"/></svg>
<div class="a" style="left:842px;top:863px;width:180px;height:25px;background:#ebebeb;border:1px solid #adadad;box-sizing:border-box;"></div>
<svg class="a" style="left:848px;top:866.8px;" width="16" height="16" viewBox="0 0 16 16"><path d="M1 4.500h3V1.500h6v3h3v3.500h2.500v6H12.500V16H7v-2.500H1Z" fill="#e6e9f2" stroke="#7a86a8" stroke-width=".9"/><path d="M2.500 3.500h6.500V1.800L14 6.500L9 11.200V9.500H2.500Z" fill="#e32222"/><path d="M15.500 7.500L9.500 9.500l1.800 1.500L8 13.500l2 1.500 3-2.800 1.500 1.300Z" fill="#f6cf2a"/></svg>
<div class="a t" style="top:868.8px;line-height:14px;left:840px;width:200px;text-align:center;">Übersicht Zu-/Abluftelemente</div>
<div class="a" style="left:1027px;top:863px;width:147px;height:25px;background:#ebebeb;border:1px solid #adadad;box-sizing:border-box;"></div>
<svg class="a" style="left:1034px;top:867px;" width="14" height="17" viewBox="0 0 14 17"><rect x="0.500" y="0.500" width="13" height="16" fill="#9c9c9c" stroke="#7e7e7e" stroke-width="1"/><rect x="2" y="6.500" width="10" height="9" fill="#d8c8c4"/><path d="M2.600 15.500L4 8.500L5.800 12L7 8.800L8.200 12L10 8.500L11.400 15.500Z" fill="#e02020"/><path d="M4.600 15.500L5.800 12.500L7 14.500L8.200 12.500L9.400 15.500Z" fill="#f4b8a8"/></svg>
<div class="a t" style="top:868.8px;line-height:14px;left:1009px;width:200px;text-align:center;">Übersicht Feuerstätten</div>
<div class="a" style="left:1647px;top:863px;width:116px;height:25px;background:#ebebeb;border:1px solid #adadad;box-sizing:border-box;"></div>
<svg class="a" style="left:1654px;top:866px;" width="14" height="18" viewBox="0 0 14 18"><path d="M1 3h12v14.500H1Z" fill="url(#gNote)" stroke="#c8a42c" stroke-width=".9"/><path d="M1.500 3.500c0-2.500 1.700-2.500 1.700 0c0-2.500 1.700-2.500 1.700 0c0-2.500 1.700-2.500 1.700 0c0-2.500 1.700-2.500 1.700 0c0-2.500 1.700-2.500 1.700 0c0-2.500 1.700-2.500 1.700 0" fill="#fff6b0" stroke="#b8962c" stroke-width=".7"/><path d="M2.500 8.500h9M2.500 11.200h9M2.500 13.900h9" stroke="#dcb432" stroke-width="1.100"/></svg>
<div class="a t" style="top:868.8px;line-height:14px;left:1614px;width:200px;text-align:center;">Notiz bearbeiten</div>
<div class="a" style="left:1550px;top:945px;width:114px;height:25px;background:#ebebeb;border:1px solid #adadad;box-sizing:border-box;"></div>
<svg class="a" style="left:1556px;top:948.8px;" width="16" height="16" viewBox="0 0 16 16"><rect x="0" y="0" width="16" height="16" rx="2" fill="url(#gGrn)"/><path d="M10.5 3.5v9L5 8Z" fill="#fff"/></svg>
<div class="a t" style="top:950.8px;line-height:14px;left:1515px;width:200px;text-align:center;">Zurück</div>
<div class="a" style="left:1674px;top:945px;width:114px;height:25px;background:#ebebeb;border:1px solid #adadad;box-sizing:border-box;"></div>
<svg class="a" style="left:1680px;top:948.8px;" width="16" height="16" viewBox="0 0 16 16"><rect x="0" y="0" width="16" height="16" rx="2" fill="url(#gGrn)"/><path d="M5.5 3.5v9L11 8Z" fill="#fff"/></svg>
<div class="a t" style="top:950.8px;line-height:14px;left:1639px;width:200px;text-align:center;">Weiter</div>
<div class="a" style="left:0px;top:980px;width:1797px;height:19px;background:#f0eeed;"></div>
<svg class="a" style="left:2px;top:983px;" width="14" height="14" viewBox="0 0 14 14"><rect x="0" y="0" width="14" height="14" rx="1.5" fill="url(#gGrn2)"/><path d="M4 4.2h6M4 7h6M4 9.8h6" stroke="#e8f0e0" stroke-width="1.6"/></svg>
<div class="a" style="left:21px;top:983px;width:1px;height:14px;background:#3a3a3a;"></div>
</body></html>
